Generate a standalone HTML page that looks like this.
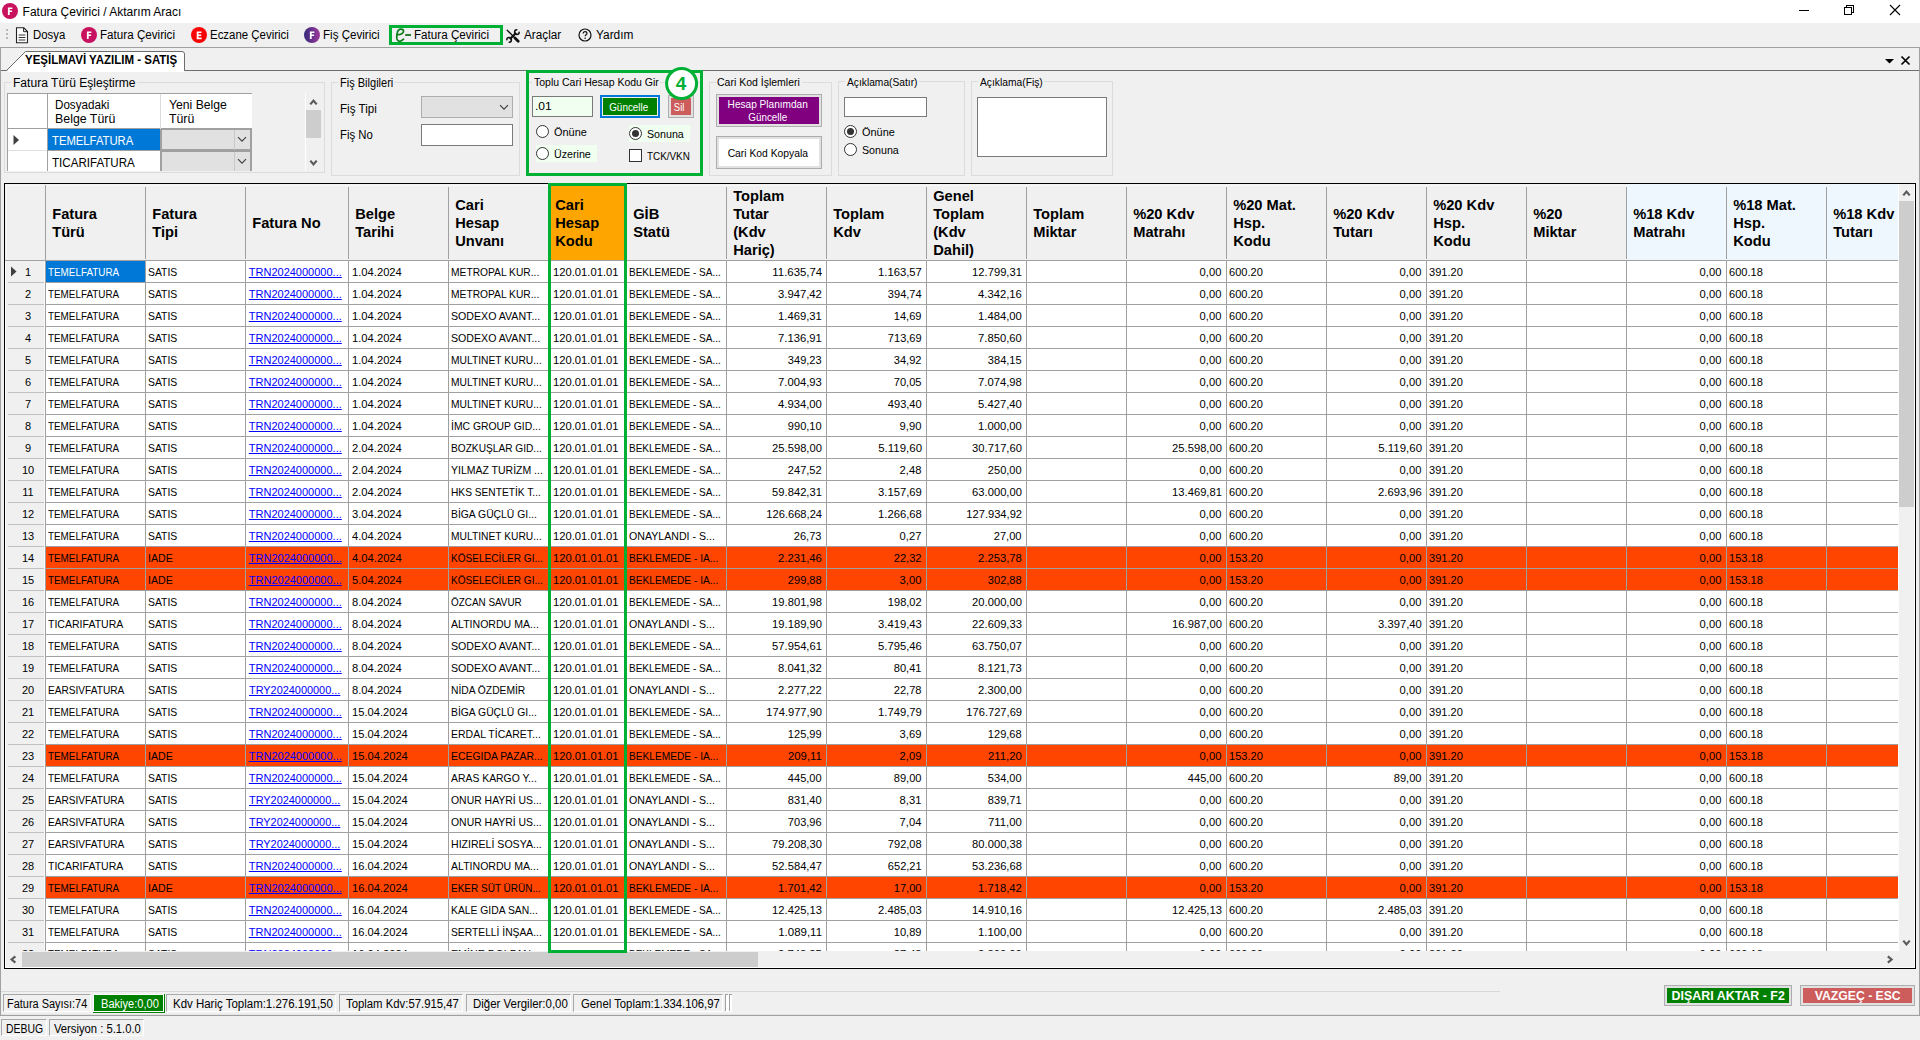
<!DOCTYPE html>
<html lang="tr"><head><meta charset="utf-8"><title>Fatura Çevirici / Aktarım Aracı</title><style>html,body{margin:0;padding:0}
body{width:1920px;height:1040px;position:relative;overflow:hidden;background:#f0f0f0;font-family:"Liberation Sans",sans-serif;font-size:11px;line-height:14px;color:#000}
div,span,svg{position:absolute;display:block}
span{white-space:pre}
#clip{left:0;top:0;width:1920px;height:951px;overflow:hidden}
</style></head><body>
<div style="left:0px;top:0px;width:1920px;height:23px;background:#fff;"></div>
<svg style="left:2px;top:3px" width="16" height="16" viewBox="0 0 16 16"><circle cx="8" cy="8" r="8" fill="#c8125e"/><path d="M5.900 4.400h4.500v1.600H7.700v1.600h2.400v1.500H7.700v3H5.900z" fill="#fff"/></svg>
<svg style="left:1790px;top:0" width="130" height="23" viewBox="0 0 130 23"><g stroke="#000" stroke-width="1" fill="none" shape-rendering="crispEdges"><path d="M9 10.5h10"/><path d="M54.5 7.5h7v7h-7z"/><path d="M56.5 7.5v-2h7v7h-2"/></g><g stroke="#000" stroke-width="1.1" fill="none"><path d="M100 5l10 10M110 5l-10 10"/></g></svg>
<div style="left:0px;top:47px;width:1920px;height:1px;background:#a0a0a0;"></div>
<div style="left:0px;top:48px;width:1px;height:968px;background:#a0a0a0;"></div>
<div style="left:1919px;top:48px;width:1px;height:968px;background:#a0a0a0;"></div>
<div style="left:0px;top:1015px;width:1920px;height:1px;background:#a0a0a0;"></div>
<div style="left:1px;top:1014px;width:1918px;height:1px;background:#e3e3e3;"></div>
<div style="left:6px;top:29px;width:2px;height:2px;background:#b8b8b8;"></div>
<div style="left:6px;top:33px;width:2px;height:2px;background:#b8b8b8;"></div>
<div style="left:6px;top:37px;width:2px;height:2px;background:#b8b8b8;"></div>
<svg style="left:15px;top:27px" width="14" height="17" viewBox="0 0 14 17"><path d="M1.5 .8h7.3l3.7 3.7v11.2h-11z" fill="#fff" stroke="#222" stroke-width="1.1"/><path d="M8.6 .8v3.9h3.9" fill="none" stroke="#222" stroke-width="1"/><path d="M3.6 8h6.8M3.6 10.5h6.8M3.6 13h6.8" stroke="#333" stroke-width="1"/></svg>
<svg style="left:81px;top:27px" width="16" height="16" viewBox="0 0 16 16"><defs><linearGradient id="g2" x1="0" y1="0" x2="1" y2="1"><stop offset="0" stop-color="#cc1259"/><stop offset="1" stop-color="#c41264"/></linearGradient></defs><circle cx="8" cy="8" r="8" fill="url(#g2)"/><path d="M5.900 4.400h4.500v1.600H7.700v1.600h2.400v1.500H7.700v3H5.900z" fill="#fff"/></svg>
<svg style="left:191px;top:27px" width="16" height="16" viewBox="0 0 16 16"><defs><linearGradient id="g3" x1="0" y1="0" x2="1" y2="1"><stop offset="0" stop-color="#ff0a0a"/><stop offset="1" stop-color="#f00000"/></linearGradient></defs><circle cx="8" cy="8" r="8" fill="url(#g3)"/><path d="M5.700 4.400h4.800v1.600H7.500v1.500h2.700v1.500H7.500v1.600h3.100v1.600H5.700z" fill="#fff"/></svg>
<svg style="left:304px;top:27px" width="16" height="16" viewBox="0 0 16 16"><defs><linearGradient id="g4" x1="0" y1="0" x2="1" y2="0"><stop offset="0" stop-color="#34287a"/><stop offset="1" stop-color="#a03a9c"/></linearGradient></defs><circle cx="8" cy="8" r="8" fill="url(#g4)"/><path d="M5.900 4.400h4.500v1.600H7.700v1.600h2.400v1.500H7.700v3H5.900z" fill="#fff"/></svg>
<div style="left:389px;top:25px;width:114px;height:20px;box-sizing:border-box;border:3px solid #00b034;"></div>
<svg style="left:394px;top:27px" width="20" height="17" viewBox="0 0 20 17"><path d="M4.200 7.600C6.500 7.600 9.500 6.200 9.500 4.200C9.500 2.600 8.200 2.100 7 2.100C4.800 2.100 3.600 4 3.200 6C2.600 8.500 2.500 10.500 2.900 12C3.500 14 5 14.500 6.300 14.200C7.600 13.800 8.600 13 9.500 12.200" fill="none" stroke="#077d17" stroke-width="1.700" stroke-linecap="round"/><path d="M11.200 8H17" stroke="#066a12" stroke-width="1.700"/></svg>
<svg style="left:506px;top:28.500px" width="14" height="14" viewBox="0 0 14 14"><g stroke="#111" fill="none" stroke-linecap="round"><path d="M1.200 1.200L8 8" stroke-width="1.300"/><path d="M9 9l3.200 3.200" stroke-width="2.800"/><path d="M4.500 9.500L9.500 4.500" stroke-width="2.200"/><path d="M10.800 .8A2.300 2.300 0 1 0 13.200 3.200" stroke-width="1.500"/><path d="M.8 10.800A2.300 2.300 0 1 1 3.200 13.200" stroke-width="1.500"/></g></svg>
<svg style="left:578px;top:28px" width="14" height="14" viewBox="0 0 14 14"><circle cx="7" cy="7" r="6" fill="none" stroke="#111" stroke-width="1.2"/><path d="M5.200 5.500c0-1.200.8-1.900 1.900-1.900s1.900.7 1.900 1.700c0 1.500-1.800 1.500-1.800 3" fill="none" stroke="#111" stroke-width="1.200"/><circle cx="7.100" cy="10.300" r=".8" fill="#111"/></svg>
<div style="left:1px;top:70px;width:1918px;height:1px;background:#6d6d6d;"></div>
<svg style="left:0;top:48px" width="200" height="24" viewBox="0 0 200 24"><path d="M6.500 22.500L25.500 3.500H182Q184.500 3.500 184.500 6V22.500" fill="#fff" stroke="#6d6d6d" stroke-width="1"/><rect x="7.500" y="22" width="176.500" height="2" fill="#fff"/></svg>
<svg style="left:1880px;top:52px" width="36" height="16" viewBox="0 0 36 16"><path d="M5 7h9l-4.500 4.500z" fill="#000"/><path d="M21.500 4.500l8 8M29.500 4.500l-8 8" stroke="#000" stroke-width="1.700"/></svg>
<div style="left:4px;top:82px;width:321px;height:91px;box-sizing:border-box;border:1px solid #dcdcdc;"></div>
<div style="left:11px;top:81px;width:125.7px;height:3px;background:#f0f0f0;"></div>
<div style="left:331px;top:82px;width:189px;height:94px;box-sizing:border-box;border:1px solid #dcdcdc;"></div>
<div style="left:338px;top:81px;width:56.5px;height:3px;background:#f0f0f0;"></div>
<div style="left:527px;top:82px;width:175px;height:94px;box-sizing:border-box;border:1px solid #dcdcdc;"></div>
<div style="left:532.4px;top:81px;width:128px;height:3px;background:#f0f0f0;"></div>
<div style="left:709px;top:82px;width:123px;height:94px;box-sizing:border-box;border:1px solid #dcdcdc;"></div>
<div style="left:715.5px;top:81px;width:86px;height:3px;background:#f0f0f0;"></div>
<div style="left:838px;top:81px;width:127px;height:95px;box-sizing:border-box;border:1px solid #dcdcdc;"></div>
<div style="left:845px;top:80px;width:73.7px;height:3px;background:#f0f0f0;"></div>
<div style="left:971px;top:81px;width:142px;height:95px;box-sizing:border-box;border:1px solid #dcdcdc;"></div>
<div style="left:978px;top:80px;width:66px;height:3px;background:#f0f0f0;"></div>
<div style="left:7px;top:93px;width:245px;height:78px;background:#fff;"></div>
<div style="left:7px;top:93px;width:245px;height:1px;background:#a0a0a0;"></div>
<div style="left:7px;top:93px;width:1px;height:78px;background:#a0a0a0;"></div>
<div style="left:8px;top:128px;width:244px;height:1px;background:#a0a0a0;"></div>
<div style="left:47px;top:94px;width:1px;height:77px;background:#a0a0a0;"></div>
<div style="left:160px;top:94px;width:1px;height:35px;background:#dcdcdc;"></div>
<div style="left:8px;top:150px;width:39px;height:1px;background:#e0e0e0;"></div>
<div style="left:48px;top:129px;width:112px;height:22px;background:#0078d7;"></div>
<div style="left:48px;top:150px;width:112px;height:1px;background:#a0a0a0;"></div>
<svg style="left:12px;top:134px" width="8" height="12" viewBox="0 0 8 12"><path d="M1.500 1l5.500 5-5.500 5z" fill="#404040"/></svg>
<div style="left:160px;top:129px;width:92px;height:22px;background:#e1e1e1;box-sizing:border-box;border:1px solid #a0a0a0;border-width:1px 2px 2px 2px;"></div>
<div style="left:234px;top:130px;width:1px;height:20px;background:#c8c8c8;"></div>
<svg style="left:237px;top:136px" width="10" height="7" viewBox="0 0 10 7"><path d="M1 1.200l4 4 4-4" fill="none" stroke="#404040" stroke-width="1.200"/></svg>
<div style="left:160px;top:151px;width:92px;height:22px;background:#e1e1e1;box-sizing:border-box;border:1px solid #a0a0a0;border-width:1px 2px 2px 2px;"></div>
<div style="left:234px;top:152px;width:1px;height:20px;background:#c8c8c8;"></div>
<svg style="left:237px;top:158px" width="10" height="7" viewBox="0 0 10 7"><path d="M1 1.200l4 4 4-4" fill="none" stroke="#404040" stroke-width="1.200"/></svg>
<div style="left:7px;top:171px;width:246px;height:1px;background:#f0f0f0;"></div>
<div style="left:7px;top:172px;width:246px;height:1px;background:#dcdcdc;"></div>
<div style="left:305px;top:93px;width:17px;height:78px;background:#f0f0f0;"></div>
<div style="left:305px;top:93px;width:1px;height:78px;background:#fff;"></div>
<div style="left:306px;top:110px;width:15px;height:28px;background:#cdcdcd;"></div>
<svg style="left:309px;top:98px" width="9" height="9" viewBox="0 0 9 9"><path d="M1.300 6.400L4.500 2.600L7.700 6.400" fill="none" stroke="#5a5a5a" stroke-width="2.200"/></svg>
<svg style="left:309px;top:159px" width="9" height="9" viewBox="0 0 9 9"><path d="M1.300 1.600L4.500 5.400L7.700 1.600" fill="none" stroke="#5a5a5a" stroke-width="2.200"/></svg>
<div style="left:421px;top:96px;width:92px;height:22px;background:#e1e1e1;box-sizing:border-box;border:1px solid #adadad;"></div>
<svg style="left:499px;top:104px" width="10" height="7" viewBox="0 0 10 7"><path d="M1 1.200l4 4 4-4" fill="none" stroke="#404040" stroke-width="1.200"/></svg>
<div style="left:421px;top:124px;width:92px;height:22px;background:#fff;box-sizing:border-box;border:1px solid #7a7a7a;"></div>
<div style="left:532px;top:96px;width:61px;height:21px;background:#f0fff0;box-sizing:border-box;border:1px solid #7a7a7a;"></div>
<div style="left:600px;top:95px;width:60px;height:23px;background:#f0f0f0;box-sizing:border-box;border:1px solid #0078d7;"></div>
<div style="left:601px;top:96px;width:58px;height:21px;box-sizing:border-box;border:1px solid #0078d7;"></div>
<div style="left:603px;top:98px;width:54px;height:17px;background:#008000;"></div>
<div style="left:668px;top:95px;width:26px;height:23px;background:#e1e1e1;box-sizing:border-box;border:1px solid #adadad;"></div>
<div style="left:671px;top:98px;width:20px;height:17px;background:#cd5c5c;"></div>
<div style="left:536px;top:145px;width:61px;height:17px;background:#f0fff0;"></div>
<div style="left:629px;top:125px;width:61px;height:17px;background:#f0fff0;"></div>
<svg style="left:536px;top:125px" width="13" height="13" viewBox="0 0 13 13"><circle cx="6.5" cy="6.5" r="6" fill="#fff" stroke="#333" stroke-width="1"/></svg>
<svg style="left:536px;top:147px" width="13" height="13" viewBox="0 0 13 13"><circle cx="6.5" cy="6.5" r="6" fill="#fff" stroke="#333" stroke-width="1"/></svg>
<svg style="left:629px;top:127px" width="13" height="13" viewBox="0 0 13 13"><circle cx="6.5" cy="6.5" r="6" fill="#fff" stroke="#333" stroke-width="1"/><circle cx="6.5" cy="6.5" r="3.500" fill="#333"/></svg>
<div style="left:629px;top:149px;width:13px;height:13px;background:#fff;box-sizing:border-box;border:1px solid #333;"></div>
<div style="left:716px;top:94px;width:106px;height:33px;background:#e1e1e1;box-sizing:border-box;border:1px solid #adadad;"></div>
<div style="left:719px;top:97px;width:100px;height:27px;background:#800080;"></div>
<div style="left:716px;top:136px;width:106px;height:33px;background:#e1e1e1;box-sizing:border-box;border:1px solid #adadad;"></div>
<div style="left:719px;top:139px;width:100px;height:27px;background:#fff;"></div>
<div style="left:844px;top:97px;width:83px;height:20px;background:#fff;box-sizing:border-box;border:1px solid #7a7a7a;"></div>
<svg style="left:844px;top:125px" width="13" height="13" viewBox="0 0 13 13"><circle cx="6.5" cy="6.5" r="6" fill="#fff" stroke="#333" stroke-width="1"/><circle cx="6.5" cy="6.5" r="3.500" fill="#333"/></svg>
<svg style="left:844px;top:143px" width="13" height="13" viewBox="0 0 13 13"><circle cx="6.5" cy="6.5" r="6" fill="#fff" stroke="#333" stroke-width="1"/></svg>
<div style="left:977px;top:97px;width:130px;height:60px;background:#fff;box-sizing:border-box;border:1px solid #7a7a7a;"></div>
<div style="left:4px;top:183px;width:1912px;height:786px;background:#000;"></div>
<div style="left:5px;top:184px;width:1910px;height:784px;background:#fff;"></div>
<div style="left:5px;top:184px;width:1893px;height:76px;background:#f0f0f0;"></div>
<div style="left:6px;top:185px;width:1892px;height:1px;background:#f8f8f8;"></div>
<div style="left:6px;top:185px;width:1px;height:75px;background:#f8f8f8;"></div>
<div style="left:1627px;top:184px;width:271px;height:76px;background:#eef6fe;"></div>
<div style="left:551px;top:186px;width:73px;height:74px;background:#ffa500;"></div>
<div style="left:5px;top:260px;width:1893px;height:1px;background:#a0a0a0;"></div>
<div style="left:45px;top:185px;width:1px;height:75px;background:#a0a0a0;"></div>
<div style="left:145px;top:187px;width:1px;height:72px;background:#a0a0a0;"></div>
<div style="left:245px;top:187px;width:1px;height:72px;background:#a0a0a0;"></div>
<div style="left:348px;top:187px;width:1px;height:72px;background:#a0a0a0;"></div>
<div style="left:448px;top:187px;width:1px;height:72px;background:#a0a0a0;"></div>
<div style="left:548px;top:187px;width:1px;height:72px;background:#a0a0a0;"></div>
<div style="left:626px;top:187px;width:1px;height:72px;background:#a0a0a0;"></div>
<div style="left:726px;top:187px;width:1px;height:72px;background:#a0a0a0;"></div>
<div style="left:826px;top:187px;width:1px;height:72px;background:#a0a0a0;"></div>
<div style="left:926px;top:187px;width:1px;height:72px;background:#a0a0a0;"></div>
<div style="left:1026px;top:187px;width:1px;height:72px;background:#a0a0a0;"></div>
<div style="left:1126px;top:187px;width:1px;height:72px;background:#a0a0a0;"></div>
<div style="left:1226px;top:187px;width:1px;height:72px;background:#a0a0a0;"></div>
<div style="left:1326px;top:187px;width:1px;height:72px;background:#a0a0a0;"></div>
<div style="left:1426px;top:187px;width:1px;height:72px;background:#a0a0a0;"></div>
<div style="left:1526px;top:187px;width:1px;height:72px;background:#a0a0a0;"></div>
<div style="left:1626px;top:187px;width:1px;height:72px;background:#a0a0a0;"></div>
<div style="left:1726px;top:187px;width:1px;height:72px;background:#a0a0a0;"></div>
<div style="left:1826px;top:187px;width:1px;height:72px;background:#a0a0a0;"></div>
<div style="left:6px;top:261px;width:39px;height:690px;background:#f0f0f0;"></div>
<div style="left:45px;top:261px;width:1px;height:690px;background:#a0a0a0;"></div>
<div style="left:44px;top:261px;width:1px;height:690px;background:#fafafa;"></div>
<div style="left:46px;top:547px;width:1852px;height:21px;background:#ff4500;"></div>
<div style="left:46px;top:569px;width:1852px;height:21px;background:#ff4500;"></div>
<div style="left:46px;top:745px;width:1852px;height:21px;background:#ff4500;"></div>
<div style="left:46px;top:877px;width:1852px;height:21px;background:#ff4500;"></div>
<div style="left:46px;top:261px;width:99px;height:21px;background:#0078d7;"></div>
<div style="left:46px;top:282px;width:1852px;height:1px;background:#a0a0a0;"></div>
<div style="left:8px;top:282px;width:36px;height:1px;background:#c0c0c0;"></div>
<div style="left:46px;top:304px;width:1852px;height:1px;background:#a0a0a0;"></div>
<div style="left:8px;top:304px;width:36px;height:1px;background:#c0c0c0;"></div>
<div style="left:46px;top:326px;width:1852px;height:1px;background:#a0a0a0;"></div>
<div style="left:8px;top:326px;width:36px;height:1px;background:#c0c0c0;"></div>
<div style="left:46px;top:348px;width:1852px;height:1px;background:#a0a0a0;"></div>
<div style="left:8px;top:348px;width:36px;height:1px;background:#c0c0c0;"></div>
<div style="left:46px;top:370px;width:1852px;height:1px;background:#a0a0a0;"></div>
<div style="left:8px;top:370px;width:36px;height:1px;background:#c0c0c0;"></div>
<div style="left:46px;top:392px;width:1852px;height:1px;background:#a0a0a0;"></div>
<div style="left:8px;top:392px;width:36px;height:1px;background:#c0c0c0;"></div>
<div style="left:46px;top:414px;width:1852px;height:1px;background:#a0a0a0;"></div>
<div style="left:8px;top:414px;width:36px;height:1px;background:#c0c0c0;"></div>
<div style="left:46px;top:436px;width:1852px;height:1px;background:#a0a0a0;"></div>
<div style="left:8px;top:436px;width:36px;height:1px;background:#c0c0c0;"></div>
<div style="left:46px;top:458px;width:1852px;height:1px;background:#a0a0a0;"></div>
<div style="left:8px;top:458px;width:36px;height:1px;background:#c0c0c0;"></div>
<div style="left:46px;top:480px;width:1852px;height:1px;background:#a0a0a0;"></div>
<div style="left:8px;top:480px;width:36px;height:1px;background:#c0c0c0;"></div>
<div style="left:46px;top:502px;width:1852px;height:1px;background:#a0a0a0;"></div>
<div style="left:8px;top:502px;width:36px;height:1px;background:#c0c0c0;"></div>
<div style="left:46px;top:524px;width:1852px;height:1px;background:#a0a0a0;"></div>
<div style="left:8px;top:524px;width:36px;height:1px;background:#c0c0c0;"></div>
<div style="left:46px;top:546px;width:1852px;height:1px;background:#a0a0a0;"></div>
<div style="left:8px;top:546px;width:36px;height:1px;background:#c0c0c0;"></div>
<div style="left:46px;top:568px;width:1852px;height:1px;background:#a0a0a0;"></div>
<div style="left:8px;top:568px;width:36px;height:1px;background:#c0c0c0;"></div>
<div style="left:46px;top:590px;width:1852px;height:1px;background:#a0a0a0;"></div>
<div style="left:8px;top:590px;width:36px;height:1px;background:#c0c0c0;"></div>
<div style="left:46px;top:612px;width:1852px;height:1px;background:#a0a0a0;"></div>
<div style="left:8px;top:612px;width:36px;height:1px;background:#c0c0c0;"></div>
<div style="left:46px;top:634px;width:1852px;height:1px;background:#a0a0a0;"></div>
<div style="left:8px;top:634px;width:36px;height:1px;background:#c0c0c0;"></div>
<div style="left:46px;top:656px;width:1852px;height:1px;background:#a0a0a0;"></div>
<div style="left:8px;top:656px;width:36px;height:1px;background:#c0c0c0;"></div>
<div style="left:46px;top:678px;width:1852px;height:1px;background:#a0a0a0;"></div>
<div style="left:8px;top:678px;width:36px;height:1px;background:#c0c0c0;"></div>
<div style="left:46px;top:700px;width:1852px;height:1px;background:#a0a0a0;"></div>
<div style="left:8px;top:700px;width:36px;height:1px;background:#c0c0c0;"></div>
<div style="left:46px;top:722px;width:1852px;height:1px;background:#a0a0a0;"></div>
<div style="left:8px;top:722px;width:36px;height:1px;background:#c0c0c0;"></div>
<div style="left:46px;top:744px;width:1852px;height:1px;background:#a0a0a0;"></div>
<div style="left:8px;top:744px;width:36px;height:1px;background:#c0c0c0;"></div>
<div style="left:46px;top:766px;width:1852px;height:1px;background:#a0a0a0;"></div>
<div style="left:8px;top:766px;width:36px;height:1px;background:#c0c0c0;"></div>
<div style="left:46px;top:788px;width:1852px;height:1px;background:#a0a0a0;"></div>
<div style="left:8px;top:788px;width:36px;height:1px;background:#c0c0c0;"></div>
<div style="left:46px;top:810px;width:1852px;height:1px;background:#a0a0a0;"></div>
<div style="left:8px;top:810px;width:36px;height:1px;background:#c0c0c0;"></div>
<div style="left:46px;top:832px;width:1852px;height:1px;background:#a0a0a0;"></div>
<div style="left:8px;top:832px;width:36px;height:1px;background:#c0c0c0;"></div>
<div style="left:46px;top:854px;width:1852px;height:1px;background:#a0a0a0;"></div>
<div style="left:8px;top:854px;width:36px;height:1px;background:#c0c0c0;"></div>
<div style="left:46px;top:876px;width:1852px;height:1px;background:#a0a0a0;"></div>
<div style="left:8px;top:876px;width:36px;height:1px;background:#c0c0c0;"></div>
<div style="left:46px;top:898px;width:1852px;height:1px;background:#a0a0a0;"></div>
<div style="left:8px;top:898px;width:36px;height:1px;background:#c0c0c0;"></div>
<div style="left:46px;top:920px;width:1852px;height:1px;background:#a0a0a0;"></div>
<div style="left:8px;top:920px;width:36px;height:1px;background:#c0c0c0;"></div>
<div style="left:46px;top:942px;width:1852px;height:1px;background:#a0a0a0;"></div>
<div style="left:8px;top:942px;width:36px;height:1px;background:#c0c0c0;"></div>
<div style="left:145px;top:261px;width:1px;height:690px;background:#a0a0a0;"></div>
<div style="left:245px;top:261px;width:1px;height:690px;background:#a0a0a0;"></div>
<div style="left:348px;top:261px;width:1px;height:690px;background:#a0a0a0;"></div>
<div style="left:448px;top:261px;width:1px;height:690px;background:#a0a0a0;"></div>
<div style="left:548px;top:261px;width:1px;height:690px;background:#a0a0a0;"></div>
<div style="left:626px;top:261px;width:1px;height:690px;background:#a0a0a0;"></div>
<div style="left:726px;top:261px;width:1px;height:690px;background:#a0a0a0;"></div>
<div style="left:826px;top:261px;width:1px;height:690px;background:#a0a0a0;"></div>
<div style="left:926px;top:261px;width:1px;height:690px;background:#a0a0a0;"></div>
<div style="left:1026px;top:261px;width:1px;height:690px;background:#a0a0a0;"></div>
<div style="left:1126px;top:261px;width:1px;height:690px;background:#a0a0a0;"></div>
<div style="left:1226px;top:261px;width:1px;height:690px;background:#a0a0a0;"></div>
<div style="left:1326px;top:261px;width:1px;height:690px;background:#a0a0a0;"></div>
<div style="left:1426px;top:261px;width:1px;height:690px;background:#a0a0a0;"></div>
<div style="left:1526px;top:261px;width:1px;height:690px;background:#a0a0a0;"></div>
<div style="left:1626px;top:261px;width:1px;height:690px;background:#a0a0a0;"></div>
<div style="left:1726px;top:261px;width:1px;height:690px;background:#a0a0a0;"></div>
<div style="left:1826px;top:261px;width:1px;height:690px;background:#a0a0a0;"></div>
<svg style="left:10px;top:266px" width="7" height="11" viewBox="0 0 7 11"><path d="M1 .5l5.500 5-5.500 5z" fill="#404040"/></svg>
<div style="left:1px;top:991px;width:1499px;height:1px;background:#d8d8d8;"></div>
<div style="left:3px;top:994px;width:88px;height:18px;background:#f0f0f0;box-sizing:border-box;border:1px solid #a8a8a8;border-right-color:#fff;border-bottom-color:#fff;"></div>
<div style="left:93px;top:994px;width:72px;height:19px;background:#008000;"></div>
<div style="left:93px;top:994px;width:71px;height:18px;background:#fff;"></div>
<div style="left:94px;top:995px;width:69px;height:16px;background:#008000;"></div>
<div style="left:166px;top:994px;width:170px;height:18px;background:#f0f0f0;box-sizing:border-box;border:1px solid #a8a8a8;border-right-color:#fff;border-bottom-color:#fff;"></div>
<div style="left:339px;top:994px;width:124px;height:18px;background:#f0f0f0;box-sizing:border-box;border:1px solid #a8a8a8;border-right-color:#fff;border-bottom-color:#fff;"></div>
<div style="left:465.5px;top:994px;width:105.5px;height:18px;background:#f0f0f0;box-sizing:border-box;border:1px solid #a8a8a8;border-right-color:#fff;border-bottom-color:#fff;"></div>
<div style="left:573px;top:994px;width:150px;height:18px;background:#f0f0f0;box-sizing:border-box;border:1px solid #a8a8a8;border-right-color:#fff;border-bottom-color:#fff;"></div>
<div style="left:726px;top:995px;width:3px;height:17px;background:#fff;"></div>
<div style="left:725px;top:994px;width:1px;height:17px;background:#a0a0a0;"></div>
<div style="left:725px;top:994px;width:3px;height:1px;background:#a0a0a0;"></div>
<div style="left:730px;top:995px;width:2px;height:17px;background:#fff;"></div>
<div style="left:729px;top:994px;width:1px;height:17px;background:#a0a0a0;"></div>
<div style="left:729px;top:994px;width:3px;height:1px;background:#a0a0a0;"></div>
<div style="left:1664px;top:985px;width:128px;height:21px;background:#e1e1e1;box-sizing:border-box;border:1px solid #adadad;"></div>
<div style="left:1667px;top:988px;width:122px;height:15px;background:#008000;"></div>
<div style="left:1800px;top:985px;width:115px;height:21px;background:#e1e1e1;box-sizing:border-box;border:1px solid #adadad;"></div>
<div style="left:1803px;top:988px;width:109px;height:15px;background:#cd5c5c;"></div>
<div style="left:1px;top:1019px;width:46px;height:17px;background:#f0f0f0;box-sizing:border-box;border:1px solid #a8a8a8;border-right-color:#fff;border-bottom-color:#fff;"></div>
<div style="left:49px;top:1019px;width:95px;height:17px;background:#f0f0f0;box-sizing:border-box;border:1px solid #a8a8a8;border-right-color:#fff;border-bottom-color:#fff;"></div>
<span style="top:3.84px;left:22.6px;font-size:12px;line-height:16px;">Fatura Çevirici / Aktarım Aracı</span>
<span style="top:26.84px;left:32.9px;font-size:12px;line-height:16px;transform:scaleX(0.947);transform-origin:0 0;">Dosya</span>
<span style="top:26.84px;left:100.1px;font-size:12px;line-height:16px;transform:scaleX(0.970);transform-origin:0 0;">Fatura Çevirici</span>
<span style="top:26.84px;left:209.6px;font-size:12px;line-height:16px;transform:scaleX(0.953);transform-origin:0 0;">Eczane Çevirici</span>
<span style="top:26.84px;left:322.6px;font-size:12px;line-height:16px;transform:scaleX(0.965);transform-origin:0 0;">Fiş Çevirici</span>
<span style="top:26.84px;left:414px;font-size:12px;line-height:16px;transform:scaleX(0.970);transform-origin:0 0;">Fatura Çevirici</span>
<span style="top:26.84px;left:524.2px;font-size:12px;line-height:16px;transform:scaleX(0.979);transform-origin:0 0;">Araçlar</span>
<span style="top:26.84px;left:596px;font-size:12px;line-height:16px;transform:scaleX(0.989);transform-origin:0 0;">Yardım</span>
<span style="top:51.84px;left:24.6px;font-size:12px;line-height:16px;font-weight:700;transform:scaleX(0.958);transform-origin:0 0;">YEŞİLMAVİ YAZILIM - SATIŞ</span>
<span style="top:74.84px;left:12.6px;font-size:12px;line-height:16px;transform:scaleX(1.006);transform-origin:0 0;">Fatura Türü Eşleştirme</span>
<span style="top:74.84px;left:339.6px;font-size:12px;line-height:16px;transform:scaleX(0.919);transform-origin:0 0;">Fiş Bilgileri</span>
<span style="top:75.19px;left:534px;transform:scaleX(0.954);transform-origin:0 0;">Toplu Cari Hesap Kodu Gir</span>
<span style="top:75.19px;left:717.1px;transform:scaleX(0.954);transform-origin:0 0;">Cari Kod İşlemleri</span>
<span style="top:75.19px;left:846.6px;transform:scaleX(0.930);transform-origin:0 0;">Açıklama(Satır)</span>
<span style="top:75.19px;left:979.6px;transform:scaleX(0.934);transform-origin:0 0;">Açıklama(Fiş)</span>
<span style="top:96.84px;left:54.6px;font-size:12px;line-height:16px;transform:scaleX(0.969);transform-origin:0 0;">Dosyadaki</span>
<span style="top:110.84px;left:54.6px;font-size:12px;line-height:16px;transform:scaleX(1.031);transform-origin:0 0;">Belge Türü</span>
<span style="top:96.84px;left:168.6px;font-size:12px;line-height:16px;transform:scaleX(1.015);transform-origin:0 0;">Yeni Belge</span>
<span style="top:110.84px;left:168.6px;font-size:12px;line-height:16px;transform:scaleX(1.025);transform-origin:0 0;">Türü</span>
<span style="top:132.54px;left:51.6px;font-size:12px;line-height:16px;color:#fff;transform:scaleX(0.940);transform-origin:0 0;">TEMELFATURA</span>
<span style="top:154.54px;left:51.6px;font-size:12px;line-height:16px;transform:scaleX(0.965);transform-origin:0 0;">TICARIFATURA</span>
<span style="top:100.84px;left:339.6px;font-size:12px;line-height:16px;transform:scaleX(0.968);transform-origin:0 0;">Fiş Tipi</span>
<span style="top:126.84px;left:339.6px;font-size:12px;line-height:16px;transform:scaleX(0.946);transform-origin:0 0;">Fiş No</span>
<span style="top:99.19px;left:534.8px;transform:scaleX(1.098);transform-origin:0 0;">.01</span>
<span style="top:99.69px;left:606.79px;color:#fff;transform:scaleX(0.900);transform-origin:50% 0;">Güncelle</span>
<span style="top:99.69px;left:673.28px;color:#fff;transform:scaleX(0.858);transform-origin:50% 0;">Sil</span>
<span style="top:125.19px;left:554.1px;transform:scaleX(0.993);transform-origin:0 0;">Önüne</span>
<span style="top:147.19px;left:554.1px;transform:scaleX(0.971);transform-origin:0 0;">Üzerine</span>
<span style="top:127.19px;left:647.1px;transform:scaleX(0.970);transform-origin:0 0;">Sonuna</span>
<span style="top:149.19px;left:647.1px;transform:scaleX(0.898);transform-origin:0 0;">TCK/VKN</span>
<span style="top:97.19px;left:724.27px;color:#fff;transform:scaleX(0.918);transform-origin:50% 0;">Hesap Planımdan</span>
<span style="top:110.19px;left:745.79px;color:#fff;transform:scaleX(0.894);transform-origin:50% 0;">Güncelle</span>
<span style="top:146.19px;left:725.2px;transform:scaleX(0.938);transform-origin:50% 0;">Cari Kod Kopyala</span>
<span style="top:125.19px;left:862.1px;transform:scaleX(0.993);transform-origin:0 0;">Önüne</span>
<span style="top:143.19px;left:862.1px;transform:scaleX(0.970);transform-origin:0 0;">Sonuna</span>
<span style="top:205.42px;left:52.2px;font-size:14.67px;line-height:19px;font-weight:700;">Fatura</span>
<span style="top:223.42px;left:52.2px;font-size:14.67px;line-height:19px;font-weight:700;">Türü</span>
<span style="top:205.42px;left:152.2px;font-size:14.67px;line-height:19px;font-weight:700;">Fatura</span>
<span style="top:223.42px;left:152.2px;font-size:14.67px;line-height:19px;font-weight:700;">Tipi</span>
<span style="top:214.42px;left:252.2px;font-size:14.67px;line-height:19px;font-weight:700;">Fatura No</span>
<span style="top:205.42px;left:355.2px;font-size:14.67px;line-height:19px;font-weight:700;">Belge</span>
<span style="top:223.42px;left:355.2px;font-size:14.67px;line-height:19px;font-weight:700;">Tarihi</span>
<span style="top:196.42px;left:455.2px;font-size:14.67px;line-height:19px;font-weight:700;">Cari</span>
<span style="top:214.42px;left:455.2px;font-size:14.67px;line-height:19px;font-weight:700;">Hesap</span>
<span style="top:232.42px;left:455.2px;font-size:14.67px;line-height:19px;font-weight:700;">Unvanı</span>
<span style="top:196.42px;left:555.2px;font-size:14.67px;line-height:19px;font-weight:700;">Cari</span>
<span style="top:214.42px;left:555.2px;font-size:14.67px;line-height:19px;font-weight:700;">Hesap</span>
<span style="top:232.42px;left:555.2px;font-size:14.67px;line-height:19px;font-weight:700;">Kodu</span>
<span style="top:205.42px;left:633.2px;font-size:14.67px;line-height:19px;font-weight:700;">GİB</span>
<span style="top:223.42px;left:633.2px;font-size:14.67px;line-height:19px;font-weight:700;">Statü</span>
<span style="top:187.42px;left:733.2px;font-size:14.67px;line-height:19px;font-weight:700;">Toplam</span>
<span style="top:205.42px;left:733.2px;font-size:14.67px;line-height:19px;font-weight:700;">Tutar</span>
<span style="top:223.42px;left:733.2px;font-size:14.67px;line-height:19px;font-weight:700;">(Kdv</span>
<span style="top:241.42px;left:733.2px;font-size:14.67px;line-height:19px;font-weight:700;">Hariç)</span>
<span style="top:205.42px;left:833.2px;font-size:14.67px;line-height:19px;font-weight:700;">Toplam</span>
<span style="top:223.42px;left:833.2px;font-size:14.67px;line-height:19px;font-weight:700;">Kdv</span>
<span style="top:187.42px;left:933.2px;font-size:14.67px;line-height:19px;font-weight:700;">Genel</span>
<span style="top:205.42px;left:933.2px;font-size:14.67px;line-height:19px;font-weight:700;">Toplam</span>
<span style="top:223.42px;left:933.2px;font-size:14.67px;line-height:19px;font-weight:700;">(Kdv</span>
<span style="top:241.42px;left:933.2px;font-size:14.67px;line-height:19px;font-weight:700;">Dahil)</span>
<span style="top:205.42px;left:1033.2px;font-size:14.67px;line-height:19px;font-weight:700;">Toplam</span>
<span style="top:223.42px;left:1033.2px;font-size:14.67px;line-height:19px;font-weight:700;">Miktar</span>
<span style="top:205.42px;left:1133.2px;font-size:14.67px;line-height:19px;font-weight:700;">%20 Kdv</span>
<span style="top:223.42px;left:1133.2px;font-size:14.67px;line-height:19px;font-weight:700;">Matrahı</span>
<span style="top:196.42px;left:1233.2px;font-size:14.67px;line-height:19px;font-weight:700;">%20 Mat.</span>
<span style="top:214.42px;left:1233.2px;font-size:14.67px;line-height:19px;font-weight:700;">Hsp.</span>
<span style="top:232.42px;left:1233.2px;font-size:14.67px;line-height:19px;font-weight:700;">Kodu</span>
<span style="top:205.42px;left:1333.2px;font-size:14.67px;line-height:19px;font-weight:700;">%20 Kdv</span>
<span style="top:223.42px;left:1333.2px;font-size:14.67px;line-height:19px;font-weight:700;">Tutarı</span>
<span style="top:196.42px;left:1433.2px;font-size:14.67px;line-height:19px;font-weight:700;">%20 Kdv</span>
<span style="top:214.42px;left:1433.2px;font-size:14.67px;line-height:19px;font-weight:700;">Hsp.</span>
<span style="top:232.42px;left:1433.2px;font-size:14.67px;line-height:19px;font-weight:700;">Kodu</span>
<span style="top:205.42px;left:1533.2px;font-size:14.67px;line-height:19px;font-weight:700;">%20</span>
<span style="top:223.42px;left:1533.2px;font-size:14.67px;line-height:19px;font-weight:700;">Miktar</span>
<span style="top:205.42px;left:1633.2px;font-size:14.67px;line-height:19px;font-weight:700;">%18 Kdv</span>
<span style="top:223.42px;left:1633.2px;font-size:14.67px;line-height:19px;font-weight:700;">Matrahı</span>
<span style="top:196.42px;left:1733.2px;font-size:14.67px;line-height:19px;font-weight:700;">%18 Mat.</span>
<span style="top:214.42px;left:1733.2px;font-size:14.67px;line-height:19px;font-weight:700;">Hsp.</span>
<span style="top:232.42px;left:1733.2px;font-size:14.67px;line-height:19px;font-weight:700;">Kodu</span>
<span style="top:205.42px;left:1833.2px;font-size:14.67px;line-height:19px;font-weight:700;">%18 Kdv</span>
<span style="top:223.42px;left:1833.2px;font-size:14.67px;line-height:19px;font-weight:700;">Tutarı</span>
<span style="top:265.19px;left:24.94px;">1</span>
<span style="top:265.19px;left:48px;color:#fff;transform:scaleX(0.898);transform-origin:0 0;">TEMELFATURA</span>
<span style="top:265.19px;left:148px;transform:scaleX(0.946);transform-origin:0 0;">SATIS</span>
<span style="top:265.19px;left:248.8px;color:#00f;text-decoration:underline;">TRN2024000000...</span>
<span style="top:265.19px;left:351.8px;transform:scaleX(1.018);transform-origin:0 0;">1.04.2024</span>
<span style="top:265.19px;left:450.8px;transform:scaleX(0.932);transform-origin:0 0;">METROPAL KUR...</span>
<span style="top:265.19px;left:552.6px;transform:scaleX(1.020);transform-origin:0 0;">120.01.01.01</span>
<span style="top:265.19px;left:628.8px;transform:scaleX(0.910);transform-origin:0 0;">BEKLEMEDE - SA...</span>
<span style="top:265.19px;right:1098.2px;transform:scaleX(1.035);transform-origin:100% 0;">11.635,74</span>
<span style="top:265.19px;right:998.2px;transform:scaleX(1.023);transform-origin:100% 0;">1.163,57</span>
<span style="top:265.19px;right:898.2px;transform:scaleX(1.018);transform-origin:100% 0;">12.799,31</span>
<span style="top:265.19px;right:698.2px;transform:scaleX(1.018);transform-origin:100% 0;">0,00</span>
<span style="top:265.19px;left:1229.1px;transform:scaleX(1.004);transform-origin:0 0;">600.20</span>
<span style="top:265.19px;right:498.2px;transform:scaleX(1.018);transform-origin:100% 0;">0,00</span>
<span style="top:265.19px;left:1429.1px;transform:scaleX(1.004);transform-origin:0 0;">391.20</span>
<span style="top:265.19px;right:198.2px;transform:scaleX(1.018);transform-origin:100% 0;">0,00</span>
<span style="top:265.19px;left:1729.1px;transform:scaleX(1.004);transform-origin:0 0;">600.18</span>
<span style="top:287.19px;left:24.94px;">2</span>
<span style="top:287.19px;left:48px;transform:scaleX(0.898);transform-origin:0 0;">TEMELFATURA</span>
<span style="top:287.19px;left:148px;transform:scaleX(0.946);transform-origin:0 0;">SATIS</span>
<span style="top:287.19px;left:248.8px;color:#00f;text-decoration:underline;">TRN2024000000...</span>
<span style="top:287.19px;left:351.8px;transform:scaleX(1.018);transform-origin:0 0;">1.04.2024</span>
<span style="top:287.19px;left:450.8px;transform:scaleX(0.932);transform-origin:0 0;">METROPAL KUR...</span>
<span style="top:287.19px;left:552.6px;transform:scaleX(1.020);transform-origin:0 0;">120.01.01.01</span>
<span style="top:287.19px;left:628.8px;transform:scaleX(0.910);transform-origin:0 0;">BEKLEMEDE - SA...</span>
<span style="top:287.19px;right:1098.2px;transform:scaleX(1.023);transform-origin:100% 0;">3.947,42</span>
<span style="top:287.19px;right:998.2px;transform:scaleX(1.004);transform-origin:100% 0;">394,74</span>
<span style="top:287.19px;right:898.2px;transform:scaleX(1.023);transform-origin:100% 0;">4.342,16</span>
<span style="top:287.19px;right:698.2px;transform:scaleX(1.018);transform-origin:100% 0;">0,00</span>
<span style="top:287.19px;left:1229.1px;transform:scaleX(1.004);transform-origin:0 0;">600.20</span>
<span style="top:287.19px;right:498.2px;transform:scaleX(1.018);transform-origin:100% 0;">0,00</span>
<span style="top:287.19px;left:1429.1px;transform:scaleX(1.004);transform-origin:0 0;">391.20</span>
<span style="top:287.19px;right:198.2px;transform:scaleX(1.018);transform-origin:100% 0;">0,00</span>
<span style="top:287.19px;left:1729.1px;transform:scaleX(1.004);transform-origin:0 0;">600.18</span>
<span style="top:309.19px;left:24.94px;">3</span>
<span style="top:309.19px;left:48px;transform:scaleX(0.898);transform-origin:0 0;">TEMELFATURA</span>
<span style="top:309.19px;left:148px;transform:scaleX(0.946);transform-origin:0 0;">SATIS</span>
<span style="top:309.19px;left:248.8px;color:#00f;text-decoration:underline;">TRN2024000000...</span>
<span style="top:309.19px;left:351.8px;transform:scaleX(1.018);transform-origin:0 0;">1.04.2024</span>
<span style="top:309.19px;left:450.8px;transform:scaleX(0.965);transform-origin:0 0;">SODEXO AVANT...</span>
<span style="top:309.19px;left:552.6px;transform:scaleX(1.020);transform-origin:0 0;">120.01.01.01</span>
<span style="top:309.19px;left:628.8px;transform:scaleX(0.910);transform-origin:0 0;">BEKLEMEDE - SA...</span>
<span style="top:309.19px;right:1098.2px;transform:scaleX(1.023);transform-origin:100% 0;">1.469,31</span>
<span style="top:309.19px;right:998.2px;transform:scaleX(1.010);transform-origin:100% 0;">14,69</span>
<span style="top:309.19px;right:898.2px;transform:scaleX(1.023);transform-origin:100% 0;">1.484,00</span>
<span style="top:309.19px;right:698.2px;transform:scaleX(1.018);transform-origin:100% 0;">0,00</span>
<span style="top:309.19px;left:1229.1px;transform:scaleX(1.004);transform-origin:0 0;">600.20</span>
<span style="top:309.19px;right:498.2px;transform:scaleX(1.018);transform-origin:100% 0;">0,00</span>
<span style="top:309.19px;left:1429.1px;transform:scaleX(1.004);transform-origin:0 0;">391.20</span>
<span style="top:309.19px;right:198.2px;transform:scaleX(1.018);transform-origin:100% 0;">0,00</span>
<span style="top:309.19px;left:1729.1px;transform:scaleX(1.004);transform-origin:0 0;">600.18</span>
<span style="top:331.19px;left:24.94px;">4</span>
<span style="top:331.19px;left:48px;transform:scaleX(0.898);transform-origin:0 0;">TEMELFATURA</span>
<span style="top:331.19px;left:148px;transform:scaleX(0.946);transform-origin:0 0;">SATIS</span>
<span style="top:331.19px;left:248.8px;color:#00f;text-decoration:underline;">TRN2024000000...</span>
<span style="top:331.19px;left:351.8px;transform:scaleX(1.018);transform-origin:0 0;">1.04.2024</span>
<span style="top:331.19px;left:450.8px;transform:scaleX(0.965);transform-origin:0 0;">SODEXO AVANT...</span>
<span style="top:331.19px;left:552.6px;transform:scaleX(1.020);transform-origin:0 0;">120.01.01.01</span>
<span style="top:331.19px;left:628.8px;transform:scaleX(0.910);transform-origin:0 0;">BEKLEMEDE - SA...</span>
<span style="top:331.19px;right:1098.2px;transform:scaleX(1.023);transform-origin:100% 0;">7.136,91</span>
<span style="top:331.19px;right:998.2px;transform:scaleX(1.004);transform-origin:100% 0;">713,69</span>
<span style="top:331.19px;right:898.2px;transform:scaleX(1.023);transform-origin:100% 0;">7.850,60</span>
<span style="top:331.19px;right:698.2px;transform:scaleX(1.018);transform-origin:100% 0;">0,00</span>
<span style="top:331.19px;left:1229.1px;transform:scaleX(1.004);transform-origin:0 0;">600.20</span>
<span style="top:331.19px;right:498.2px;transform:scaleX(1.018);transform-origin:100% 0;">0,00</span>
<span style="top:331.19px;left:1429.1px;transform:scaleX(1.004);transform-origin:0 0;">391.20</span>
<span style="top:331.19px;right:198.2px;transform:scaleX(1.018);transform-origin:100% 0;">0,00</span>
<span style="top:331.19px;left:1729.1px;transform:scaleX(1.004);transform-origin:0 0;">600.18</span>
<span style="top:353.19px;left:24.94px;">5</span>
<span style="top:353.19px;left:48px;transform:scaleX(0.898);transform-origin:0 0;">TEMELFATURA</span>
<span style="top:353.19px;left:148px;transform:scaleX(0.946);transform-origin:0 0;">SATIS</span>
<span style="top:353.19px;left:248.8px;color:#00f;text-decoration:underline;">TRN2024000000...</span>
<span style="top:353.19px;left:351.8px;transform:scaleX(1.018);transform-origin:0 0;">1.04.2024</span>
<span style="top:353.19px;left:450.8px;transform:scaleX(0.932);transform-origin:0 0;">MULTINET KURU...</span>
<span style="top:353.19px;left:552.6px;transform:scaleX(1.020);transform-origin:0 0;">120.01.01.01</span>
<span style="top:353.19px;left:628.8px;transform:scaleX(0.910);transform-origin:0 0;">BEKLEMEDE - SA...</span>
<span style="top:353.19px;right:1098.2px;transform:scaleX(1.004);transform-origin:100% 0;">349,23</span>
<span style="top:353.19px;right:998.2px;transform:scaleX(1.010);transform-origin:100% 0;">34,92</span>
<span style="top:353.19px;right:898.2px;transform:scaleX(1.004);transform-origin:100% 0;">384,15</span>
<span style="top:353.19px;right:698.2px;transform:scaleX(1.018);transform-origin:100% 0;">0,00</span>
<span style="top:353.19px;left:1229.1px;transform:scaleX(1.004);transform-origin:0 0;">600.20</span>
<span style="top:353.19px;right:498.2px;transform:scaleX(1.018);transform-origin:100% 0;">0,00</span>
<span style="top:353.19px;left:1429.1px;transform:scaleX(1.004);transform-origin:0 0;">391.20</span>
<span style="top:353.19px;right:198.2px;transform:scaleX(1.018);transform-origin:100% 0;">0,00</span>
<span style="top:353.19px;left:1729.1px;transform:scaleX(1.004);transform-origin:0 0;">600.18</span>
<span style="top:375.19px;left:24.94px;">6</span>
<span style="top:375.19px;left:48px;transform:scaleX(0.898);transform-origin:0 0;">TEMELFATURA</span>
<span style="top:375.19px;left:148px;transform:scaleX(0.946);transform-origin:0 0;">SATIS</span>
<span style="top:375.19px;left:248.8px;color:#00f;text-decoration:underline;">TRN2024000000...</span>
<span style="top:375.19px;left:351.8px;transform:scaleX(1.018);transform-origin:0 0;">1.04.2024</span>
<span style="top:375.19px;left:450.8px;transform:scaleX(0.932);transform-origin:0 0;">MULTINET KURU...</span>
<span style="top:375.19px;left:552.6px;transform:scaleX(1.020);transform-origin:0 0;">120.01.01.01</span>
<span style="top:375.19px;left:628.8px;transform:scaleX(0.910);transform-origin:0 0;">BEKLEMEDE - SA...</span>
<span style="top:375.19px;right:1098.2px;transform:scaleX(1.023);transform-origin:100% 0;">7.004,93</span>
<span style="top:375.19px;right:998.2px;transform:scaleX(1.010);transform-origin:100% 0;">70,05</span>
<span style="top:375.19px;right:898.2px;transform:scaleX(1.023);transform-origin:100% 0;">7.074,98</span>
<span style="top:375.19px;right:698.2px;transform:scaleX(1.018);transform-origin:100% 0;">0,00</span>
<span style="top:375.19px;left:1229.1px;transform:scaleX(1.004);transform-origin:0 0;">600.20</span>
<span style="top:375.19px;right:498.2px;transform:scaleX(1.018);transform-origin:100% 0;">0,00</span>
<span style="top:375.19px;left:1429.1px;transform:scaleX(1.004);transform-origin:0 0;">391.20</span>
<span style="top:375.19px;right:198.2px;transform:scaleX(1.018);transform-origin:100% 0;">0,00</span>
<span style="top:375.19px;left:1729.1px;transform:scaleX(1.004);transform-origin:0 0;">600.18</span>
<span style="top:397.19px;left:24.94px;">7</span>
<span style="top:397.19px;left:48px;transform:scaleX(0.898);transform-origin:0 0;">TEMELFATURA</span>
<span style="top:397.19px;left:148px;transform:scaleX(0.946);transform-origin:0 0;">SATIS</span>
<span style="top:397.19px;left:248.8px;color:#00f;text-decoration:underline;">TRN2024000000...</span>
<span style="top:397.19px;left:351.8px;transform:scaleX(1.018);transform-origin:0 0;">1.04.2024</span>
<span style="top:397.19px;left:450.8px;transform:scaleX(0.932);transform-origin:0 0;">MULTINET KURU...</span>
<span style="top:397.19px;left:552.6px;transform:scaleX(1.020);transform-origin:0 0;">120.01.01.01</span>
<span style="top:397.19px;left:628.8px;transform:scaleX(0.910);transform-origin:0 0;">BEKLEMEDE - SA...</span>
<span style="top:397.19px;right:1098.2px;transform:scaleX(1.023);transform-origin:100% 0;">4.934,00</span>
<span style="top:397.19px;right:998.2px;transform:scaleX(1.004);transform-origin:100% 0;">493,40</span>
<span style="top:397.19px;right:898.2px;transform:scaleX(1.023);transform-origin:100% 0;">5.427,40</span>
<span style="top:397.19px;right:698.2px;transform:scaleX(1.018);transform-origin:100% 0;">0,00</span>
<span style="top:397.19px;left:1229.1px;transform:scaleX(1.004);transform-origin:0 0;">600.20</span>
<span style="top:397.19px;right:498.2px;transform:scaleX(1.018);transform-origin:100% 0;">0,00</span>
<span style="top:397.19px;left:1429.1px;transform:scaleX(1.004);transform-origin:0 0;">391.20</span>
<span style="top:397.19px;right:198.2px;transform:scaleX(1.018);transform-origin:100% 0;">0,00</span>
<span style="top:397.19px;left:1729.1px;transform:scaleX(1.004);transform-origin:0 0;">600.18</span>
<span style="top:419.19px;left:24.94px;">8</span>
<span style="top:419.19px;left:48px;transform:scaleX(0.898);transform-origin:0 0;">TEMELFATURA</span>
<span style="top:419.19px;left:148px;transform:scaleX(0.946);transform-origin:0 0;">SATIS</span>
<span style="top:419.19px;left:248.8px;color:#00f;text-decoration:underline;">TRN2024000000...</span>
<span style="top:419.19px;left:351.8px;transform:scaleX(1.018);transform-origin:0 0;">1.04.2024</span>
<span style="top:419.19px;left:450.8px;transform:scaleX(0.944);transform-origin:0 0;">İMC GROUP GID...</span>
<span style="top:419.19px;left:552.6px;transform:scaleX(1.020);transform-origin:0 0;">120.01.01.01</span>
<span style="top:419.19px;left:628.8px;transform:scaleX(0.910);transform-origin:0 0;">BEKLEMEDE - SA...</span>
<span style="top:419.19px;right:1098.2px;transform:scaleX(1.004);transform-origin:100% 0;">990,10</span>
<span style="top:419.19px;right:998.2px;transform:scaleX(1.018);transform-origin:100% 0;">9,90</span>
<span style="top:419.19px;right:898.2px;transform:scaleX(1.023);transform-origin:100% 0;">1.000,00</span>
<span style="top:419.19px;right:698.2px;transform:scaleX(1.018);transform-origin:100% 0;">0,00</span>
<span style="top:419.19px;left:1229.1px;transform:scaleX(1.004);transform-origin:0 0;">600.20</span>
<span style="top:419.19px;right:498.2px;transform:scaleX(1.018);transform-origin:100% 0;">0,00</span>
<span style="top:419.19px;left:1429.1px;transform:scaleX(1.004);transform-origin:0 0;">391.20</span>
<span style="top:419.19px;right:198.2px;transform:scaleX(1.018);transform-origin:100% 0;">0,00</span>
<span style="top:419.19px;left:1729.1px;transform:scaleX(1.004);transform-origin:0 0;">600.18</span>
<span style="top:441.19px;left:24.94px;">9</span>
<span style="top:441.19px;left:48px;transform:scaleX(0.898);transform-origin:0 0;">TEMELFATURA</span>
<span style="top:441.19px;left:148px;transform:scaleX(0.946);transform-origin:0 0;">SATIS</span>
<span style="top:441.19px;left:248.8px;color:#00f;text-decoration:underline;">TRN2024000000...</span>
<span style="top:441.19px;left:351.8px;transform:scaleX(1.018);transform-origin:0 0;">2.04.2024</span>
<span style="top:441.19px;left:450.8px;transform:scaleX(0.923);transform-origin:0 0;">BOZKUŞLAR GID...</span>
<span style="top:441.19px;left:552.6px;transform:scaleX(1.020);transform-origin:0 0;">120.01.01.01</span>
<span style="top:441.19px;left:628.8px;transform:scaleX(0.910);transform-origin:0 0;">BEKLEMEDE - SA...</span>
<span style="top:441.19px;right:1098.2px;transform:scaleX(1.018);transform-origin:100% 0;">25.598,00</span>
<span style="top:441.19px;right:998.2px;transform:scaleX(1.042);transform-origin:100% 0;">5.119,60</span>
<span style="top:441.19px;right:898.2px;transform:scaleX(1.018);transform-origin:100% 0;">30.717,60</span>
<span style="top:441.19px;right:698.2px;transform:scaleX(1.018);transform-origin:100% 0;">25.598,00</span>
<span style="top:441.19px;left:1229.1px;transform:scaleX(1.004);transform-origin:0 0;">600.20</span>
<span style="top:441.19px;right:498.2px;transform:scaleX(1.042);transform-origin:100% 0;">5.119,60</span>
<span style="top:441.19px;left:1429.1px;transform:scaleX(1.004);transform-origin:0 0;">391.20</span>
<span style="top:441.19px;right:198.2px;transform:scaleX(1.018);transform-origin:100% 0;">0,00</span>
<span style="top:441.19px;left:1729.1px;transform:scaleX(1.004);transform-origin:0 0;">600.18</span>
<span style="top:463.19px;left:21.88px;">10</span>
<span style="top:463.19px;left:48px;transform:scaleX(0.898);transform-origin:0 0;">TEMELFATURA</span>
<span style="top:463.19px;left:148px;transform:scaleX(0.946);transform-origin:0 0;">SATIS</span>
<span style="top:463.19px;left:248.8px;color:#00f;text-decoration:underline;">TRN2024000000...</span>
<span style="top:463.19px;left:351.8px;transform:scaleX(1.018);transform-origin:0 0;">2.04.2024</span>
<span style="top:463.19px;left:450.8px;transform:scaleX(0.953);transform-origin:0 0;">YILMAZ TURİZM ...</span>
<span style="top:463.19px;left:552.6px;transform:scaleX(1.020);transform-origin:0 0;">120.01.01.01</span>
<span style="top:463.19px;left:628.8px;transform:scaleX(0.910);transform-origin:0 0;">BEKLEMEDE - SA...</span>
<span style="top:463.19px;right:1098.2px;transform:scaleX(1.004);transform-origin:100% 0;">247,52</span>
<span style="top:463.19px;right:998.2px;transform:scaleX(1.018);transform-origin:100% 0;">2,48</span>
<span style="top:463.19px;right:898.2px;transform:scaleX(1.004);transform-origin:100% 0;">250,00</span>
<span style="top:463.19px;right:698.2px;transform:scaleX(1.018);transform-origin:100% 0;">0,00</span>
<span style="top:463.19px;left:1229.1px;transform:scaleX(1.004);transform-origin:0 0;">600.20</span>
<span style="top:463.19px;right:498.2px;transform:scaleX(1.018);transform-origin:100% 0;">0,00</span>
<span style="top:463.19px;left:1429.1px;transform:scaleX(1.004);transform-origin:0 0;">391.20</span>
<span style="top:463.19px;right:198.2px;transform:scaleX(1.018);transform-origin:100% 0;">0,00</span>
<span style="top:463.19px;left:1729.1px;transform:scaleX(1.004);transform-origin:0 0;">600.18</span>
<span style="top:485.19px;left:22.29px;">11</span>
<span style="top:485.19px;left:48px;transform:scaleX(0.898);transform-origin:0 0;">TEMELFATURA</span>
<span style="top:485.19px;left:148px;transform:scaleX(0.946);transform-origin:0 0;">SATIS</span>
<span style="top:485.19px;left:248.8px;color:#00f;text-decoration:underline;">TRN2024000000...</span>
<span style="top:485.19px;left:351.8px;transform:scaleX(1.018);transform-origin:0 0;">2.04.2024</span>
<span style="top:485.19px;left:450.8px;transform:scaleX(0.926);transform-origin:0 0;">HKS SENTETİK T...</span>
<span style="top:485.19px;left:552.6px;transform:scaleX(1.020);transform-origin:0 0;">120.01.01.01</span>
<span style="top:485.19px;left:628.8px;transform:scaleX(0.910);transform-origin:0 0;">BEKLEMEDE - SA...</span>
<span style="top:485.19px;right:1098.2px;transform:scaleX(1.018);transform-origin:100% 0;">59.842,31</span>
<span style="top:485.19px;right:998.2px;transform:scaleX(1.023);transform-origin:100% 0;">3.157,69</span>
<span style="top:485.19px;right:898.2px;transform:scaleX(1.018);transform-origin:100% 0;">63.000,00</span>
<span style="top:485.19px;right:698.2px;transform:scaleX(1.018);transform-origin:100% 0;">13.469,81</span>
<span style="top:485.19px;left:1229.1px;transform:scaleX(1.004);transform-origin:0 0;">600.20</span>
<span style="top:485.19px;right:498.2px;transform:scaleX(1.023);transform-origin:100% 0;">2.693,96</span>
<span style="top:485.19px;left:1429.1px;transform:scaleX(1.004);transform-origin:0 0;">391.20</span>
<span style="top:485.19px;right:198.2px;transform:scaleX(1.018);transform-origin:100% 0;">0,00</span>
<span style="top:485.19px;left:1729.1px;transform:scaleX(1.004);transform-origin:0 0;">600.18</span>
<span style="top:507.19px;left:21.88px;">12</span>
<span style="top:507.19px;left:48px;transform:scaleX(0.898);transform-origin:0 0;">TEMELFATURA</span>
<span style="top:507.19px;left:148px;transform:scaleX(0.946);transform-origin:0 0;">SATIS</span>
<span style="top:507.19px;left:248.8px;color:#00f;text-decoration:underline;">TRN2024000000...</span>
<span style="top:507.19px;left:351.8px;transform:scaleX(1.018);transform-origin:0 0;">3.04.2024</span>
<span style="top:507.19px;left:450.8px;transform:scaleX(0.942);transform-origin:0 0;">BİGA GÜÇLÜ GI...</span>
<span style="top:507.19px;left:552.6px;transform:scaleX(1.020);transform-origin:0 0;">120.01.01.01</span>
<span style="top:507.19px;left:628.8px;transform:scaleX(0.910);transform-origin:0 0;">BEKLEMEDE - SA...</span>
<span style="top:507.19px;right:1098.2px;transform:scaleX(1.013);transform-origin:100% 0;">126.668,24</span>
<span style="top:507.19px;right:998.2px;transform:scaleX(1.023);transform-origin:100% 0;">1.266,68</span>
<span style="top:507.19px;right:898.2px;transform:scaleX(1.013);transform-origin:100% 0;">127.934,92</span>
<span style="top:507.19px;right:698.2px;transform:scaleX(1.018);transform-origin:100% 0;">0,00</span>
<span style="top:507.19px;left:1229.1px;transform:scaleX(1.004);transform-origin:0 0;">600.20</span>
<span style="top:507.19px;right:498.2px;transform:scaleX(1.018);transform-origin:100% 0;">0,00</span>
<span style="top:507.19px;left:1429.1px;transform:scaleX(1.004);transform-origin:0 0;">391.20</span>
<span style="top:507.19px;right:198.2px;transform:scaleX(1.018);transform-origin:100% 0;">0,00</span>
<span style="top:507.19px;left:1729.1px;transform:scaleX(1.004);transform-origin:0 0;">600.18</span>
<span style="top:529.19px;left:21.88px;">13</span>
<span style="top:529.19px;left:48px;transform:scaleX(0.898);transform-origin:0 0;">TEMELFATURA</span>
<span style="top:529.19px;left:148px;transform:scaleX(0.946);transform-origin:0 0;">SATIS</span>
<span style="top:529.19px;left:248.8px;color:#00f;text-decoration:underline;">TRN2024000000...</span>
<span style="top:529.19px;left:351.8px;transform:scaleX(1.018);transform-origin:0 0;">4.04.2024</span>
<span style="top:529.19px;left:450.8px;transform:scaleX(0.932);transform-origin:0 0;">MULTINET KURU...</span>
<span style="top:529.19px;left:552.6px;transform:scaleX(1.020);transform-origin:0 0;">120.01.01.01</span>
<span style="top:529.19px;left:628.8px;transform:scaleX(0.964);transform-origin:0 0;">ONAYLANDI - S...</span>
<span style="top:529.19px;right:1098.2px;transform:scaleX(1.010);transform-origin:100% 0;">26,73</span>
<span style="top:529.19px;right:998.2px;transform:scaleX(1.018);transform-origin:100% 0;">0,27</span>
<span style="top:529.19px;right:898.2px;transform:scaleX(1.010);transform-origin:100% 0;">27,00</span>
<span style="top:529.19px;right:698.2px;transform:scaleX(1.018);transform-origin:100% 0;">0,00</span>
<span style="top:529.19px;left:1229.1px;transform:scaleX(1.004);transform-origin:0 0;">600.20</span>
<span style="top:529.19px;right:498.2px;transform:scaleX(1.018);transform-origin:100% 0;">0,00</span>
<span style="top:529.19px;left:1429.1px;transform:scaleX(1.004);transform-origin:0 0;">391.20</span>
<span style="top:529.19px;right:198.2px;transform:scaleX(1.018);transform-origin:100% 0;">0,00</span>
<span style="top:529.19px;left:1729.1px;transform:scaleX(1.004);transform-origin:0 0;">600.18</span>
<span style="top:551.19px;left:21.88px;">14</span>
<span style="top:551.19px;left:48px;transform:scaleX(0.898);transform-origin:0 0;">TEMELFATURA</span>
<span style="top:551.19px;left:148px;transform:scaleX(0.965);transform-origin:0 0;">IADE</span>
<span style="top:551.19px;left:248.8px;color:#00f;text-decoration:underline;">TRN2024000000...</span>
<span style="top:551.19px;left:351.8px;transform:scaleX(1.018);transform-origin:0 0;">4.04.2024</span>
<span style="top:551.19px;left:450.8px;transform:scaleX(0.916);transform-origin:0 0;">KÖSELECİLER GI...</span>
<span style="top:551.19px;left:552.6px;transform:scaleX(1.020);transform-origin:0 0;">120.01.01.01</span>
<span style="top:551.19px;left:628.8px;transform:scaleX(0.924);transform-origin:0 0;">BEKLEMEDE - IA...</span>
<span style="top:551.19px;right:1098.2px;transform:scaleX(1.023);transform-origin:100% 0;">2.231,46</span>
<span style="top:551.19px;right:998.2px;transform:scaleX(1.010);transform-origin:100% 0;">22,32</span>
<span style="top:551.19px;right:898.2px;transform:scaleX(1.023);transform-origin:100% 0;">2.253,78</span>
<span style="top:551.19px;right:698.2px;transform:scaleX(1.018);transform-origin:100% 0;">0,00</span>
<span style="top:551.19px;left:1229.1px;transform:scaleX(1.004);transform-origin:0 0;">153.20</span>
<span style="top:551.19px;right:498.2px;transform:scaleX(1.018);transform-origin:100% 0;">0,00</span>
<span style="top:551.19px;left:1429.1px;transform:scaleX(1.004);transform-origin:0 0;">391.20</span>
<span style="top:551.19px;right:198.2px;transform:scaleX(1.018);transform-origin:100% 0;">0,00</span>
<span style="top:551.19px;left:1729.1px;transform:scaleX(1.004);transform-origin:0 0;">153.18</span>
<span style="top:573.19px;left:21.88px;">15</span>
<span style="top:573.19px;left:48px;transform:scaleX(0.898);transform-origin:0 0;">TEMELFATURA</span>
<span style="top:573.19px;left:148px;transform:scaleX(0.965);transform-origin:0 0;">IADE</span>
<span style="top:573.19px;left:248.8px;color:#00f;text-decoration:underline;">TRN2024000000...</span>
<span style="top:573.19px;left:351.8px;transform:scaleX(1.018);transform-origin:0 0;">5.04.2024</span>
<span style="top:573.19px;left:450.8px;transform:scaleX(0.916);transform-origin:0 0;">KÖSELECİLER GI...</span>
<span style="top:573.19px;left:552.6px;transform:scaleX(1.020);transform-origin:0 0;">120.01.01.01</span>
<span style="top:573.19px;left:628.8px;transform:scaleX(0.924);transform-origin:0 0;">BEKLEMEDE - IA...</span>
<span style="top:573.19px;right:1098.2px;transform:scaleX(1.004);transform-origin:100% 0;">299,88</span>
<span style="top:573.19px;right:998.2px;transform:scaleX(1.018);transform-origin:100% 0;">3,00</span>
<span style="top:573.19px;right:898.2px;transform:scaleX(1.004);transform-origin:100% 0;">302,88</span>
<span style="top:573.19px;right:698.2px;transform:scaleX(1.018);transform-origin:100% 0;">0,00</span>
<span style="top:573.19px;left:1229.1px;transform:scaleX(1.004);transform-origin:0 0;">153.20</span>
<span style="top:573.19px;right:498.2px;transform:scaleX(1.018);transform-origin:100% 0;">0,00</span>
<span style="top:573.19px;left:1429.1px;transform:scaleX(1.004);transform-origin:0 0;">391.20</span>
<span style="top:573.19px;right:198.2px;transform:scaleX(1.018);transform-origin:100% 0;">0,00</span>
<span style="top:573.19px;left:1729.1px;transform:scaleX(1.004);transform-origin:0 0;">153.18</span>
<span style="top:595.19px;left:21.88px;">16</span>
<span style="top:595.19px;left:48px;transform:scaleX(0.898);transform-origin:0 0;">TEMELFATURA</span>
<span style="top:595.19px;left:148px;transform:scaleX(0.946);transform-origin:0 0;">SATIS</span>
<span style="top:595.19px;left:248.8px;color:#00f;text-decoration:underline;">TRN2024000000...</span>
<span style="top:595.19px;left:351.8px;transform:scaleX(1.018);transform-origin:0 0;">8.04.2024</span>
<span style="top:595.19px;left:450.8px;transform:scaleX(0.900);transform-origin:0 0;">ÖZCAN SAVUR</span>
<span style="top:595.19px;left:552.6px;transform:scaleX(1.020);transform-origin:0 0;">120.01.01.01</span>
<span style="top:595.19px;left:628.8px;transform:scaleX(0.910);transform-origin:0 0;">BEKLEMEDE - SA...</span>
<span style="top:595.19px;right:1098.2px;transform:scaleX(1.018);transform-origin:100% 0;">19.801,98</span>
<span style="top:595.19px;right:998.2px;transform:scaleX(1.004);transform-origin:100% 0;">198,02</span>
<span style="top:595.19px;right:898.2px;transform:scaleX(1.018);transform-origin:100% 0;">20.000,00</span>
<span style="top:595.19px;right:698.2px;transform:scaleX(1.018);transform-origin:100% 0;">0,00</span>
<span style="top:595.19px;left:1229.1px;transform:scaleX(1.004);transform-origin:0 0;">600.20</span>
<span style="top:595.19px;right:498.2px;transform:scaleX(1.018);transform-origin:100% 0;">0,00</span>
<span style="top:595.19px;left:1429.1px;transform:scaleX(1.004);transform-origin:0 0;">391.20</span>
<span style="top:595.19px;right:198.2px;transform:scaleX(1.018);transform-origin:100% 0;">0,00</span>
<span style="top:595.19px;left:1729.1px;transform:scaleX(1.004);transform-origin:0 0;">600.18</span>
<span style="top:617.19px;left:21.88px;">17</span>
<span style="top:617.19px;left:48px;transform:scaleX(0.958);transform-origin:0 0;">TICARIFATURA</span>
<span style="top:617.19px;left:148px;transform:scaleX(0.946);transform-origin:0 0;">SATIS</span>
<span style="top:617.19px;left:248.8px;color:#00f;text-decoration:underline;">TRN2024000000...</span>
<span style="top:617.19px;left:351.8px;transform:scaleX(1.018);transform-origin:0 0;">8.04.2024</span>
<span style="top:617.19px;left:450.8px;transform:scaleX(0.960);transform-origin:0 0;">ALTINORDU MA...</span>
<span style="top:617.19px;left:552.6px;transform:scaleX(1.020);transform-origin:0 0;">120.01.01.01</span>
<span style="top:617.19px;left:628.8px;transform:scaleX(0.964);transform-origin:0 0;">ONAYLANDI - S...</span>
<span style="top:617.19px;right:1098.2px;transform:scaleX(1.018);transform-origin:100% 0;">19.189,90</span>
<span style="top:617.19px;right:998.2px;transform:scaleX(1.023);transform-origin:100% 0;">3.419,43</span>
<span style="top:617.19px;right:898.2px;transform:scaleX(1.018);transform-origin:100% 0;">22.609,33</span>
<span style="top:617.19px;right:698.2px;transform:scaleX(1.018);transform-origin:100% 0;">16.987,00</span>
<span style="top:617.19px;left:1229.1px;transform:scaleX(1.004);transform-origin:0 0;">600.20</span>
<span style="top:617.19px;right:498.2px;transform:scaleX(1.023);transform-origin:100% 0;">3.397,40</span>
<span style="top:617.19px;left:1429.1px;transform:scaleX(1.004);transform-origin:0 0;">391.20</span>
<span style="top:617.19px;right:198.2px;transform:scaleX(1.018);transform-origin:100% 0;">0,00</span>
<span style="top:617.19px;left:1729.1px;transform:scaleX(1.004);transform-origin:0 0;">600.18</span>
<span style="top:639.19px;left:21.88px;">18</span>
<span style="top:639.19px;left:48px;transform:scaleX(0.898);transform-origin:0 0;">TEMELFATURA</span>
<span style="top:639.19px;left:148px;transform:scaleX(0.946);transform-origin:0 0;">SATIS</span>
<span style="top:639.19px;left:248.8px;color:#00f;text-decoration:underline;">TRN2024000000...</span>
<span style="top:639.19px;left:351.8px;transform:scaleX(1.018);transform-origin:0 0;">8.04.2024</span>
<span style="top:639.19px;left:450.8px;transform:scaleX(0.965);transform-origin:0 0;">SODEXO AVANT...</span>
<span style="top:639.19px;left:552.6px;transform:scaleX(1.020);transform-origin:0 0;">120.01.01.01</span>
<span style="top:639.19px;left:628.8px;transform:scaleX(0.910);transform-origin:0 0;">BEKLEMEDE - SA...</span>
<span style="top:639.19px;right:1098.2px;transform:scaleX(1.018);transform-origin:100% 0;">57.954,61</span>
<span style="top:639.19px;right:998.2px;transform:scaleX(1.023);transform-origin:100% 0;">5.795,46</span>
<span style="top:639.19px;right:898.2px;transform:scaleX(1.018);transform-origin:100% 0;">63.750,07</span>
<span style="top:639.19px;right:698.2px;transform:scaleX(1.018);transform-origin:100% 0;">0,00</span>
<span style="top:639.19px;left:1229.1px;transform:scaleX(1.004);transform-origin:0 0;">600.20</span>
<span style="top:639.19px;right:498.2px;transform:scaleX(1.018);transform-origin:100% 0;">0,00</span>
<span style="top:639.19px;left:1429.1px;transform:scaleX(1.004);transform-origin:0 0;">391.20</span>
<span style="top:639.19px;right:198.2px;transform:scaleX(1.018);transform-origin:100% 0;">0,00</span>
<span style="top:639.19px;left:1729.1px;transform:scaleX(1.004);transform-origin:0 0;">600.18</span>
<span style="top:661.19px;left:21.88px;">19</span>
<span style="top:661.19px;left:48px;transform:scaleX(0.898);transform-origin:0 0;">TEMELFATURA</span>
<span style="top:661.19px;left:148px;transform:scaleX(0.946);transform-origin:0 0;">SATIS</span>
<span style="top:661.19px;left:248.8px;color:#00f;text-decoration:underline;">TRN2024000000...</span>
<span style="top:661.19px;left:351.8px;transform:scaleX(1.018);transform-origin:0 0;">8.04.2024</span>
<span style="top:661.19px;left:450.8px;transform:scaleX(0.965);transform-origin:0 0;">SODEXO AVANT...</span>
<span style="top:661.19px;left:552.6px;transform:scaleX(1.020);transform-origin:0 0;">120.01.01.01</span>
<span style="top:661.19px;left:628.8px;transform:scaleX(0.910);transform-origin:0 0;">BEKLEMEDE - SA...</span>
<span style="top:661.19px;right:1098.2px;transform:scaleX(1.023);transform-origin:100% 0;">8.041,32</span>
<span style="top:661.19px;right:998.2px;transform:scaleX(1.010);transform-origin:100% 0;">80,41</span>
<span style="top:661.19px;right:898.2px;transform:scaleX(1.023);transform-origin:100% 0;">8.121,73</span>
<span style="top:661.19px;right:698.2px;transform:scaleX(1.018);transform-origin:100% 0;">0,00</span>
<span style="top:661.19px;left:1229.1px;transform:scaleX(1.004);transform-origin:0 0;">600.20</span>
<span style="top:661.19px;right:498.2px;transform:scaleX(1.018);transform-origin:100% 0;">0,00</span>
<span style="top:661.19px;left:1429.1px;transform:scaleX(1.004);transform-origin:0 0;">391.20</span>
<span style="top:661.19px;right:198.2px;transform:scaleX(1.018);transform-origin:100% 0;">0,00</span>
<span style="top:661.19px;left:1729.1px;transform:scaleX(1.004);transform-origin:0 0;">600.18</span>
<span style="top:683.19px;left:21.88px;">20</span>
<span style="top:683.19px;left:48px;transform:scaleX(0.920);transform-origin:0 0;">EARSIVFATURA</span>
<span style="top:683.19px;left:148px;transform:scaleX(0.946);transform-origin:0 0;">SATIS</span>
<span style="top:683.19px;left:248.8px;color:#00f;text-decoration:underline;transform:scaleX(0.991);transform-origin:0 0;">TRY2024000000...</span>
<span style="top:683.19px;left:351.8px;transform:scaleX(1.018);transform-origin:0 0;">8.04.2024</span>
<span style="top:683.19px;left:450.8px;transform:scaleX(0.935);transform-origin:0 0;">NİDA ÖZDEMİR</span>
<span style="top:683.19px;left:552.6px;transform:scaleX(1.020);transform-origin:0 0;">120.01.01.01</span>
<span style="top:683.19px;left:628.8px;transform:scaleX(0.964);transform-origin:0 0;">ONAYLANDI - S...</span>
<span style="top:683.19px;right:1098.2px;transform:scaleX(1.023);transform-origin:100% 0;">2.277,22</span>
<span style="top:683.19px;right:998.2px;transform:scaleX(1.010);transform-origin:100% 0;">22,78</span>
<span style="top:683.19px;right:898.2px;transform:scaleX(1.023);transform-origin:100% 0;">2.300,00</span>
<span style="top:683.19px;right:698.2px;transform:scaleX(1.018);transform-origin:100% 0;">0,00</span>
<span style="top:683.19px;left:1229.1px;transform:scaleX(1.004);transform-origin:0 0;">600.20</span>
<span style="top:683.19px;right:498.2px;transform:scaleX(1.018);transform-origin:100% 0;">0,00</span>
<span style="top:683.19px;left:1429.1px;transform:scaleX(1.004);transform-origin:0 0;">391.20</span>
<span style="top:683.19px;right:198.2px;transform:scaleX(1.018);transform-origin:100% 0;">0,00</span>
<span style="top:683.19px;left:1729.1px;transform:scaleX(1.004);transform-origin:0 0;">600.18</span>
<span style="top:705.19px;left:21.88px;">21</span>
<span style="top:705.19px;left:48px;transform:scaleX(0.898);transform-origin:0 0;">TEMELFATURA</span>
<span style="top:705.19px;left:148px;transform:scaleX(0.946);transform-origin:0 0;">SATIS</span>
<span style="top:705.19px;left:248.8px;color:#00f;text-decoration:underline;">TRN2024000000...</span>
<span style="top:705.19px;left:351.8px;transform:scaleX(1.013);transform-origin:0 0;">15.04.2024</span>
<span style="top:705.19px;left:450.8px;transform:scaleX(0.942);transform-origin:0 0;">BİGA GÜÇLÜ GI...</span>
<span style="top:705.19px;left:552.6px;transform:scaleX(1.020);transform-origin:0 0;">120.01.01.01</span>
<span style="top:705.19px;left:628.8px;transform:scaleX(0.910);transform-origin:0 0;">BEKLEMEDE - SA...</span>
<span style="top:705.19px;right:1098.2px;transform:scaleX(1.013);transform-origin:100% 0;">174.977,90</span>
<span style="top:705.19px;right:998.2px;transform:scaleX(1.023);transform-origin:100% 0;">1.749,79</span>
<span style="top:705.19px;right:898.2px;transform:scaleX(1.013);transform-origin:100% 0;">176.727,69</span>
<span style="top:705.19px;right:698.2px;transform:scaleX(1.018);transform-origin:100% 0;">0,00</span>
<span style="top:705.19px;left:1229.1px;transform:scaleX(1.004);transform-origin:0 0;">600.20</span>
<span style="top:705.19px;right:498.2px;transform:scaleX(1.018);transform-origin:100% 0;">0,00</span>
<span style="top:705.19px;left:1429.1px;transform:scaleX(1.004);transform-origin:0 0;">391.20</span>
<span style="top:705.19px;right:198.2px;transform:scaleX(1.018);transform-origin:100% 0;">0,00</span>
<span style="top:705.19px;left:1729.1px;transform:scaleX(1.004);transform-origin:0 0;">600.18</span>
<span style="top:727.19px;left:21.88px;">22</span>
<span style="top:727.19px;left:48px;transform:scaleX(0.898);transform-origin:0 0;">TEMELFATURA</span>
<span style="top:727.19px;left:148px;transform:scaleX(0.946);transform-origin:0 0;">SATIS</span>
<span style="top:727.19px;left:248.8px;color:#00f;text-decoration:underline;">TRN2024000000...</span>
<span style="top:727.19px;left:351.8px;transform:scaleX(1.013);transform-origin:0 0;">15.04.2024</span>
<span style="top:727.19px;left:450.8px;transform:scaleX(0.954);transform-origin:0 0;">ERDAL TİCARET...</span>
<span style="top:727.19px;left:552.6px;transform:scaleX(1.020);transform-origin:0 0;">120.01.01.01</span>
<span style="top:727.19px;left:628.8px;transform:scaleX(0.910);transform-origin:0 0;">BEKLEMEDE - SA...</span>
<span style="top:727.19px;right:1098.2px;transform:scaleX(1.004);transform-origin:100% 0;">125,99</span>
<span style="top:727.19px;right:998.2px;transform:scaleX(1.018);transform-origin:100% 0;">3,69</span>
<span style="top:727.19px;right:898.2px;transform:scaleX(1.004);transform-origin:100% 0;">129,68</span>
<span style="top:727.19px;right:698.2px;transform:scaleX(1.018);transform-origin:100% 0;">0,00</span>
<span style="top:727.19px;left:1229.1px;transform:scaleX(1.004);transform-origin:0 0;">600.20</span>
<span style="top:727.19px;right:498.2px;transform:scaleX(1.018);transform-origin:100% 0;">0,00</span>
<span style="top:727.19px;left:1429.1px;transform:scaleX(1.004);transform-origin:0 0;">391.20</span>
<span style="top:727.19px;right:198.2px;transform:scaleX(1.018);transform-origin:100% 0;">0,00</span>
<span style="top:727.19px;left:1729.1px;transform:scaleX(1.004);transform-origin:0 0;">600.18</span>
<span style="top:749.19px;left:21.88px;">23</span>
<span style="top:749.19px;left:48px;transform:scaleX(0.898);transform-origin:0 0;">TEMELFATURA</span>
<span style="top:749.19px;left:148px;transform:scaleX(0.965);transform-origin:0 0;">IADE</span>
<span style="top:749.19px;left:248.8px;color:#00f;text-decoration:underline;">TRN2024000000...</span>
<span style="top:749.19px;left:351.8px;transform:scaleX(1.013);transform-origin:0 0;">15.04.2024</span>
<span style="top:749.19px;left:450.8px;transform:scaleX(0.946);transform-origin:0 0;">ECEGIDA PAZAR...</span>
<span style="top:749.19px;left:552.6px;transform:scaleX(1.020);transform-origin:0 0;">120.01.01.01</span>
<span style="top:749.19px;left:628.8px;transform:scaleX(0.924);transform-origin:0 0;">BEKLEMEDE - IA...</span>
<span style="top:749.19px;right:1098.2px;transform:scaleX(1.030);transform-origin:100% 0;">209,11</span>
<span style="top:749.19px;right:998.2px;transform:scaleX(1.018);transform-origin:100% 0;">2,09</span>
<span style="top:749.19px;right:898.2px;transform:scaleX(1.030);transform-origin:100% 0;">211,20</span>
<span style="top:749.19px;right:698.2px;transform:scaleX(1.018);transform-origin:100% 0;">0,00</span>
<span style="top:749.19px;left:1229.1px;transform:scaleX(1.004);transform-origin:0 0;">153.20</span>
<span style="top:749.19px;right:498.2px;transform:scaleX(1.018);transform-origin:100% 0;">0,00</span>
<span style="top:749.19px;left:1429.1px;transform:scaleX(1.004);transform-origin:0 0;">391.20</span>
<span style="top:749.19px;right:198.2px;transform:scaleX(1.018);transform-origin:100% 0;">0,00</span>
<span style="top:749.19px;left:1729.1px;transform:scaleX(1.004);transform-origin:0 0;">153.18</span>
<span style="top:771.19px;left:21.88px;">24</span>
<span style="top:771.19px;left:48px;transform:scaleX(0.898);transform-origin:0 0;">TEMELFATURA</span>
<span style="top:771.19px;left:148px;transform:scaleX(0.946);transform-origin:0 0;">SATIS</span>
<span style="top:771.19px;left:248.8px;color:#00f;text-decoration:underline;">TRN2024000000...</span>
<span style="top:771.19px;left:351.8px;transform:scaleX(1.013);transform-origin:0 0;">15.04.2024</span>
<span style="top:771.19px;left:450.8px;transform:scaleX(0.946);transform-origin:0 0;">ARAS KARGO Y...</span>
<span style="top:771.19px;left:552.6px;transform:scaleX(1.020);transform-origin:0 0;">120.01.01.01</span>
<span style="top:771.19px;left:628.8px;transform:scaleX(0.910);transform-origin:0 0;">BEKLEMEDE - SA...</span>
<span style="top:771.19px;right:1098.2px;transform:scaleX(1.004);transform-origin:100% 0;">445,00</span>
<span style="top:771.19px;right:998.2px;transform:scaleX(1.010);transform-origin:100% 0;">89,00</span>
<span style="top:771.19px;right:898.2px;transform:scaleX(1.004);transform-origin:100% 0;">534,00</span>
<span style="top:771.19px;right:698.2px;transform:scaleX(1.004);transform-origin:100% 0;">445,00</span>
<span style="top:771.19px;left:1229.1px;transform:scaleX(1.004);transform-origin:0 0;">600.20</span>
<span style="top:771.19px;right:498.2px;transform:scaleX(1.010);transform-origin:100% 0;">89,00</span>
<span style="top:771.19px;left:1429.1px;transform:scaleX(1.004);transform-origin:0 0;">391.20</span>
<span style="top:771.19px;right:198.2px;transform:scaleX(1.018);transform-origin:100% 0;">0,00</span>
<span style="top:771.19px;left:1729.1px;transform:scaleX(1.004);transform-origin:0 0;">600.18</span>
<span style="top:793.19px;left:21.88px;">25</span>
<span style="top:793.19px;left:48px;transform:scaleX(0.920);transform-origin:0 0;">EARSIVFATURA</span>
<span style="top:793.19px;left:148px;transform:scaleX(0.946);transform-origin:0 0;">SATIS</span>
<span style="top:793.19px;left:248.8px;color:#00f;text-decoration:underline;transform:scaleX(0.991);transform-origin:0 0;">TRY2024000000...</span>
<span style="top:793.19px;left:351.8px;transform:scaleX(1.013);transform-origin:0 0;">15.04.2024</span>
<span style="top:793.19px;left:450.8px;transform:scaleX(0.948);transform-origin:0 0;">ONUR HAYRİ US...</span>
<span style="top:793.19px;left:552.6px;transform:scaleX(1.020);transform-origin:0 0;">120.01.01.01</span>
<span style="top:793.19px;left:628.8px;transform:scaleX(0.964);transform-origin:0 0;">ONAYLANDI - S...</span>
<span style="top:793.19px;right:1098.2px;transform:scaleX(1.004);transform-origin:100% 0;">831,40</span>
<span style="top:793.19px;right:998.2px;transform:scaleX(1.018);transform-origin:100% 0;">8,31</span>
<span style="top:793.19px;right:898.2px;transform:scaleX(1.004);transform-origin:100% 0;">839,71</span>
<span style="top:793.19px;right:698.2px;transform:scaleX(1.018);transform-origin:100% 0;">0,00</span>
<span style="top:793.19px;left:1229.1px;transform:scaleX(1.004);transform-origin:0 0;">600.20</span>
<span style="top:793.19px;right:498.2px;transform:scaleX(1.018);transform-origin:100% 0;">0,00</span>
<span style="top:793.19px;left:1429.1px;transform:scaleX(1.004);transform-origin:0 0;">391.20</span>
<span style="top:793.19px;right:198.2px;transform:scaleX(1.018);transform-origin:100% 0;">0,00</span>
<span style="top:793.19px;left:1729.1px;transform:scaleX(1.004);transform-origin:0 0;">600.18</span>
<span style="top:815.19px;left:21.88px;">26</span>
<span style="top:815.19px;left:48px;transform:scaleX(0.920);transform-origin:0 0;">EARSIVFATURA</span>
<span style="top:815.19px;left:148px;transform:scaleX(0.946);transform-origin:0 0;">SATIS</span>
<span style="top:815.19px;left:248.8px;color:#00f;text-decoration:underline;transform:scaleX(0.991);transform-origin:0 0;">TRY2024000000...</span>
<span style="top:815.19px;left:351.8px;transform:scaleX(1.013);transform-origin:0 0;">15.04.2024</span>
<span style="top:815.19px;left:450.8px;transform:scaleX(0.948);transform-origin:0 0;">ONUR HAYRİ US...</span>
<span style="top:815.19px;left:552.6px;transform:scaleX(1.020);transform-origin:0 0;">120.01.01.01</span>
<span style="top:815.19px;left:628.8px;transform:scaleX(0.964);transform-origin:0 0;">ONAYLANDI - S...</span>
<span style="top:815.19px;right:1098.2px;transform:scaleX(1.004);transform-origin:100% 0;">703,96</span>
<span style="top:815.19px;right:998.2px;transform:scaleX(1.018);transform-origin:100% 0;">7,04</span>
<span style="top:815.19px;right:898.2px;transform:scaleX(1.030);transform-origin:100% 0;">711,00</span>
<span style="top:815.19px;right:698.2px;transform:scaleX(1.018);transform-origin:100% 0;">0,00</span>
<span style="top:815.19px;left:1229.1px;transform:scaleX(1.004);transform-origin:0 0;">600.20</span>
<span style="top:815.19px;right:498.2px;transform:scaleX(1.018);transform-origin:100% 0;">0,00</span>
<span style="top:815.19px;left:1429.1px;transform:scaleX(1.004);transform-origin:0 0;">391.20</span>
<span style="top:815.19px;right:198.2px;transform:scaleX(1.018);transform-origin:100% 0;">0,00</span>
<span style="top:815.19px;left:1729.1px;transform:scaleX(1.004);transform-origin:0 0;">600.18</span>
<span style="top:837.19px;left:21.88px;">27</span>
<span style="top:837.19px;left:48px;transform:scaleX(0.920);transform-origin:0 0;">EARSIVFATURA</span>
<span style="top:837.19px;left:148px;transform:scaleX(0.946);transform-origin:0 0;">SATIS</span>
<span style="top:837.19px;left:248.8px;color:#00f;text-decoration:underline;transform:scaleX(0.991);transform-origin:0 0;">TRY2024000000...</span>
<span style="top:837.19px;left:351.8px;transform:scaleX(1.013);transform-origin:0 0;">15.04.2024</span>
<span style="top:837.19px;left:450.8px;transform:scaleX(0.960);transform-origin:0 0;">HIZIRELİ SOSYA...</span>
<span style="top:837.19px;left:552.6px;transform:scaleX(1.020);transform-origin:0 0;">120.01.01.01</span>
<span style="top:837.19px;left:628.8px;transform:scaleX(0.964);transform-origin:0 0;">ONAYLANDI - S...</span>
<span style="top:837.19px;right:1098.2px;transform:scaleX(1.018);transform-origin:100% 0;">79.208,30</span>
<span style="top:837.19px;right:998.2px;transform:scaleX(1.004);transform-origin:100% 0;">792,08</span>
<span style="top:837.19px;right:898.2px;transform:scaleX(1.018);transform-origin:100% 0;">80.000,38</span>
<span style="top:837.19px;right:698.2px;transform:scaleX(1.018);transform-origin:100% 0;">0,00</span>
<span style="top:837.19px;left:1229.1px;transform:scaleX(1.004);transform-origin:0 0;">600.20</span>
<span style="top:837.19px;right:498.2px;transform:scaleX(1.018);transform-origin:100% 0;">0,00</span>
<span style="top:837.19px;left:1429.1px;transform:scaleX(1.004);transform-origin:0 0;">391.20</span>
<span style="top:837.19px;right:198.2px;transform:scaleX(1.018);transform-origin:100% 0;">0,00</span>
<span style="top:837.19px;left:1729.1px;transform:scaleX(1.004);transform-origin:0 0;">600.18</span>
<span style="top:859.19px;left:21.88px;">28</span>
<span style="top:859.19px;left:48px;transform:scaleX(0.958);transform-origin:0 0;">TICARIFATURA</span>
<span style="top:859.19px;left:148px;transform:scaleX(0.946);transform-origin:0 0;">SATIS</span>
<span style="top:859.19px;left:248.8px;color:#00f;text-decoration:underline;">TRN2024000000...</span>
<span style="top:859.19px;left:351.8px;transform:scaleX(1.013);transform-origin:0 0;">16.04.2024</span>
<span style="top:859.19px;left:450.8px;transform:scaleX(0.960);transform-origin:0 0;">ALTINORDU MA...</span>
<span style="top:859.19px;left:552.6px;transform:scaleX(1.020);transform-origin:0 0;">120.01.01.01</span>
<span style="top:859.19px;left:628.8px;transform:scaleX(0.964);transform-origin:0 0;">ONAYLANDI - S...</span>
<span style="top:859.19px;right:1098.2px;transform:scaleX(1.018);transform-origin:100% 0;">52.584,47</span>
<span style="top:859.19px;right:998.2px;transform:scaleX(1.004);transform-origin:100% 0;">652,21</span>
<span style="top:859.19px;right:898.2px;transform:scaleX(1.018);transform-origin:100% 0;">53.236,68</span>
<span style="top:859.19px;right:698.2px;transform:scaleX(1.018);transform-origin:100% 0;">0,00</span>
<span style="top:859.19px;left:1229.1px;transform:scaleX(1.004);transform-origin:0 0;">600.20</span>
<span style="top:859.19px;right:498.2px;transform:scaleX(1.018);transform-origin:100% 0;">0,00</span>
<span style="top:859.19px;left:1429.1px;transform:scaleX(1.004);transform-origin:0 0;">391.20</span>
<span style="top:859.19px;right:198.2px;transform:scaleX(1.018);transform-origin:100% 0;">0,00</span>
<span style="top:859.19px;left:1729.1px;transform:scaleX(1.004);transform-origin:0 0;">600.18</span>
<span style="top:881.19px;left:21.88px;">29</span>
<span style="top:881.19px;left:48px;transform:scaleX(0.898);transform-origin:0 0;">TEMELFATURA</span>
<span style="top:881.19px;left:148px;transform:scaleX(0.965);transform-origin:0 0;">IADE</span>
<span style="top:881.19px;left:248.8px;color:#00f;text-decoration:underline;">TRN2024000000...</span>
<span style="top:881.19px;left:351.8px;transform:scaleX(1.013);transform-origin:0 0;">16.04.2024</span>
<span style="top:881.19px;left:450.8px;transform:scaleX(0.909);transform-origin:0 0;">EKER SÜT ÜRÜN...</span>
<span style="top:881.19px;left:552.6px;transform:scaleX(1.020);transform-origin:0 0;">120.01.01.01</span>
<span style="top:881.19px;left:628.8px;transform:scaleX(0.924);transform-origin:0 0;">BEKLEMEDE - IA...</span>
<span style="top:881.19px;right:1098.2px;transform:scaleX(1.023);transform-origin:100% 0;">1.701,42</span>
<span style="top:881.19px;right:998.2px;transform:scaleX(1.010);transform-origin:100% 0;">17,00</span>
<span style="top:881.19px;right:898.2px;transform:scaleX(1.023);transform-origin:100% 0;">1.718,42</span>
<span style="top:881.19px;right:698.2px;transform:scaleX(1.018);transform-origin:100% 0;">0,00</span>
<span style="top:881.19px;left:1229.1px;transform:scaleX(1.004);transform-origin:0 0;">153.20</span>
<span style="top:881.19px;right:498.2px;transform:scaleX(1.018);transform-origin:100% 0;">0,00</span>
<span style="top:881.19px;left:1429.1px;transform:scaleX(1.004);transform-origin:0 0;">391.20</span>
<span style="top:881.19px;right:198.2px;transform:scaleX(1.018);transform-origin:100% 0;">0,00</span>
<span style="top:881.19px;left:1729.1px;transform:scaleX(1.004);transform-origin:0 0;">153.18</span>
<span style="top:903.19px;left:21.88px;">30</span>
<span style="top:903.19px;left:48px;transform:scaleX(0.898);transform-origin:0 0;">TEMELFATURA</span>
<span style="top:903.19px;left:148px;transform:scaleX(0.946);transform-origin:0 0;">SATIS</span>
<span style="top:903.19px;left:248.8px;color:#00f;text-decoration:underline;">TRN2024000000...</span>
<span style="top:903.19px;left:351.8px;transform:scaleX(1.013);transform-origin:0 0;">16.04.2024</span>
<span style="top:903.19px;left:450.8px;transform:scaleX(0.940);transform-origin:0 0;">KALE GIDA SAN...</span>
<span style="top:903.19px;left:552.6px;transform:scaleX(1.020);transform-origin:0 0;">120.01.01.01</span>
<span style="top:903.19px;left:628.8px;transform:scaleX(0.910);transform-origin:0 0;">BEKLEMEDE - SA...</span>
<span style="top:903.19px;right:1098.2px;transform:scaleX(1.018);transform-origin:100% 0;">12.425,13</span>
<span style="top:903.19px;right:998.2px;transform:scaleX(1.023);transform-origin:100% 0;">2.485,03</span>
<span style="top:903.19px;right:898.2px;transform:scaleX(1.018);transform-origin:100% 0;">14.910,16</span>
<span style="top:903.19px;right:698.2px;transform:scaleX(1.018);transform-origin:100% 0;">12.425,13</span>
<span style="top:903.19px;left:1229.1px;transform:scaleX(1.004);transform-origin:0 0;">600.20</span>
<span style="top:903.19px;right:498.2px;transform:scaleX(1.023);transform-origin:100% 0;">2.485,03</span>
<span style="top:903.19px;left:1429.1px;transform:scaleX(1.004);transform-origin:0 0;">391.20</span>
<span style="top:903.19px;right:198.2px;transform:scaleX(1.018);transform-origin:100% 0;">0,00</span>
<span style="top:903.19px;left:1729.1px;transform:scaleX(1.004);transform-origin:0 0;">600.18</span>
<span style="top:925.19px;left:21.88px;">31</span>
<span style="top:925.19px;left:48px;transform:scaleX(0.898);transform-origin:0 0;">TEMELFATURA</span>
<span style="top:925.19px;left:148px;transform:scaleX(0.946);transform-origin:0 0;">SATIS</span>
<span style="top:925.19px;left:248.8px;color:#00f;text-decoration:underline;">TRN2024000000...</span>
<span style="top:925.19px;left:351.8px;transform:scaleX(1.013);transform-origin:0 0;">16.04.2024</span>
<span style="top:925.19px;left:450.8px;transform:scaleX(0.936);transform-origin:0 0;">SERTELLİ İNŞAA...</span>
<span style="top:925.19px;left:552.6px;transform:scaleX(1.020);transform-origin:0 0;">120.01.01.01</span>
<span style="top:925.19px;left:628.8px;transform:scaleX(0.910);transform-origin:0 0;">BEKLEMEDE - SA...</span>
<span style="top:925.19px;right:1098.2px;transform:scaleX(1.042);transform-origin:100% 0;">1.089,11</span>
<span style="top:925.19px;right:998.2px;transform:scaleX(1.010);transform-origin:100% 0;">10,89</span>
<span style="top:925.19px;right:898.2px;transform:scaleX(1.023);transform-origin:100% 0;">1.100,00</span>
<span style="top:925.19px;right:698.2px;transform:scaleX(1.018);transform-origin:100% 0;">0,00</span>
<span style="top:925.19px;left:1229.1px;transform:scaleX(1.004);transform-origin:0 0;">600.20</span>
<span style="top:925.19px;right:498.2px;transform:scaleX(1.018);transform-origin:100% 0;">0,00</span>
<span style="top:925.19px;left:1429.1px;transform:scaleX(1.004);transform-origin:0 0;">391.20</span>
<span style="top:925.19px;right:198.2px;transform:scaleX(1.018);transform-origin:100% 0;">0,00</span>
<span style="top:925.19px;left:1729.1px;transform:scaleX(1.004);transform-origin:0 0;">600.18</span>
<span style="top:996.34px;left:7.1px;font-size:12px;line-height:16px;transform:scaleX(0.912);transform-origin:0 0;">Fatura Sayısı:74</span>
<span style="top:996.34px;left:101.1px;font-size:12px;line-height:16px;color:#fff;transform:scaleX(0.922);transform-origin:0 0;">Bakiye:0,00</span>
<span style="top:996.34px;left:172.9px;font-size:12px;line-height:16px;transform:scaleX(0.956);transform-origin:0 0;">Kdv Hariç Toplam:1.276.191,50</span>
<span style="top:996.34px;left:346.4px;font-size:12px;line-height:16px;transform:scaleX(0.945);transform-origin:0 0;">Toplam Kdv:57.915,47</span>
<span style="top:996.34px;left:472.6px;font-size:12px;line-height:16px;transform:scaleX(0.954);transform-origin:0 0;">Diğer Vergiler:0,00</span>
<span style="top:996.34px;left:580.6px;font-size:12px;line-height:16px;transform:scaleX(0.943);transform-origin:0 0;">Genel Toplam:1.334.106,97</span>
<span style="top:986.5px;left:1668.77px;font-size:13px;line-height:17px;font-weight:700;color:#fff;transform:scaleX(0.956);transform-origin:50% 0;">DIŞARI AKTAR - F2</span>
<span style="top:986.5px;left:1811.75px;font-size:13px;line-height:17px;font-weight:700;color:#fff;transform:scaleX(0.938);transform-origin:50% 0;">VAZGEÇ - ESC</span>
<span style="top:1020.84px;left:5.9px;font-size:12px;line-height:16px;transform:scaleX(0.867);transform-origin:0 0;">DEBUG</span>
<span style="top:1020.84px;left:53.6px;font-size:12px;line-height:16px;transform:scaleX(0.936);transform-origin:0 0;">Versiyon : 5.1.0.0</span>
<div id="clip"><span style="top:947.19px;left:21.88px;">32</span>
<span style="top:947.19px;left:48px;transform:scaleX(0.898);transform-origin:0 0;">TEMELFATURA</span>
<span style="top:947.19px;left:148px;transform:scaleX(0.946);transform-origin:0 0;">SATIS</span>
<span style="top:947.19px;left:248.8px;color:#00f;text-decoration:underline;">TRN2024000000...</span>
<span style="top:947.19px;left:351.8px;transform:scaleX(1.013);transform-origin:0 0;">16.04.2024</span>
<span style="top:947.19px;left:450.8px;transform:scaleX(0.971);transform-origin:0 0;">EMİNE DOLPAN...</span>
<span style="top:947.19px;left:552.6px;transform:scaleX(1.020);transform-origin:0 0;">120.01.01.01</span>
<span style="top:947.19px;left:628.8px;transform:scaleX(0.910);transform-origin:0 0;">BEKLEMEDE - SA...</span>
<span style="top:947.19px;right:1098.2px;transform:scaleX(1.023);transform-origin:100% 0;">2.748,25</span>
<span style="top:947.19px;right:998.2px;transform:scaleX(1.010);transform-origin:100% 0;">27,48</span>
<span style="top:947.19px;right:898.2px;transform:scaleX(1.023);transform-origin:100% 0;">2.800,00</span>
<span style="top:947.19px;right:698.2px;transform:scaleX(1.018);transform-origin:100% 0;">0,00</span>
<span style="top:947.19px;left:1229.1px;transform:scaleX(1.004);transform-origin:0 0;">600.20</span>
<span style="top:947.19px;right:498.2px;transform:scaleX(1.018);transform-origin:100% 0;">0,00</span>
<span style="top:947.19px;left:1429.1px;transform:scaleX(1.004);transform-origin:0 0;">391.20</span>
<span style="top:947.19px;right:198.2px;transform:scaleX(1.018);transform-origin:100% 0;">0,00</span>
<span style="top:947.19px;left:1729.1px;transform:scaleX(1.004);transform-origin:0 0;">600.18</span></div>
<div style="left:526px;top:70px;width:177px;height:106px;box-sizing:border-box;border:3px solid #00b034"></div>
<svg style="left:664px;top:66px" width="36" height="36" viewBox="0 0 36 36"><circle cx="17.600" cy="17.500" r="15" fill="#fff" stroke="#00b034" stroke-width="3"/></svg>
<div style="left:5px;top:951px;width:1910px;height:17px;background:#fff"></div><div style="left:6px;top:951px;width:1908px;height:16px;background:#f0f0f0"></div>
<div style="left:22px;top:952px;width:736px;height:15px;background:#cdcdcd"></div>
<svg style="left:9px;top:955px" width="8" height="10" viewBox="0 0 8 10"><path d="M6.400 1.300L2.600 4.500L6.400 7.700" fill="none" stroke="#5a5a5a" stroke-width="2.200"/></svg>
<svg style="left:1886px;top:955px" width="8" height="10" viewBox="0 0 8 10"><path d="M1.800 1.300L5.600 4.500L1.800 7.700" fill="none" stroke="#5a5a5a" stroke-width="2.200"/></svg>
<div style="left:1898px;top:184px;width:17px;height:767px;background:#fff"></div>
<div style="left:1899px;top:184px;width:15px;height:767px;background:#f0f0f0"></div>
<div style="left:1899px;top:201px;width:15px;height:306px;background:#cdcdcd"></div>
<svg style="left:1902px;top:189px" width="9" height="9" viewBox="0 0 9 9"><path d="M1.300 6.400L4.500 2.600L7.700 6.400" fill="none" stroke="#5a5a5a" stroke-width="2.200"/></svg>
<svg style="left:1902px;top:939px" width="9" height="9" viewBox="0 0 9 9"><path d="M1.300 1.600L4.500 5.400L7.700 1.600" fill="none" stroke="#5a5a5a" stroke-width="2.200"/></svg>
<div style="left:548px;top:183px;width:79px;height:770px;box-sizing:border-box;border:3px solid #00b034"></div>
<span style="top:72.49px;left:675.77px;font-size:18.8px;line-height:24px;font-weight:700;color:#00b034;">4</span>
</body></html>
